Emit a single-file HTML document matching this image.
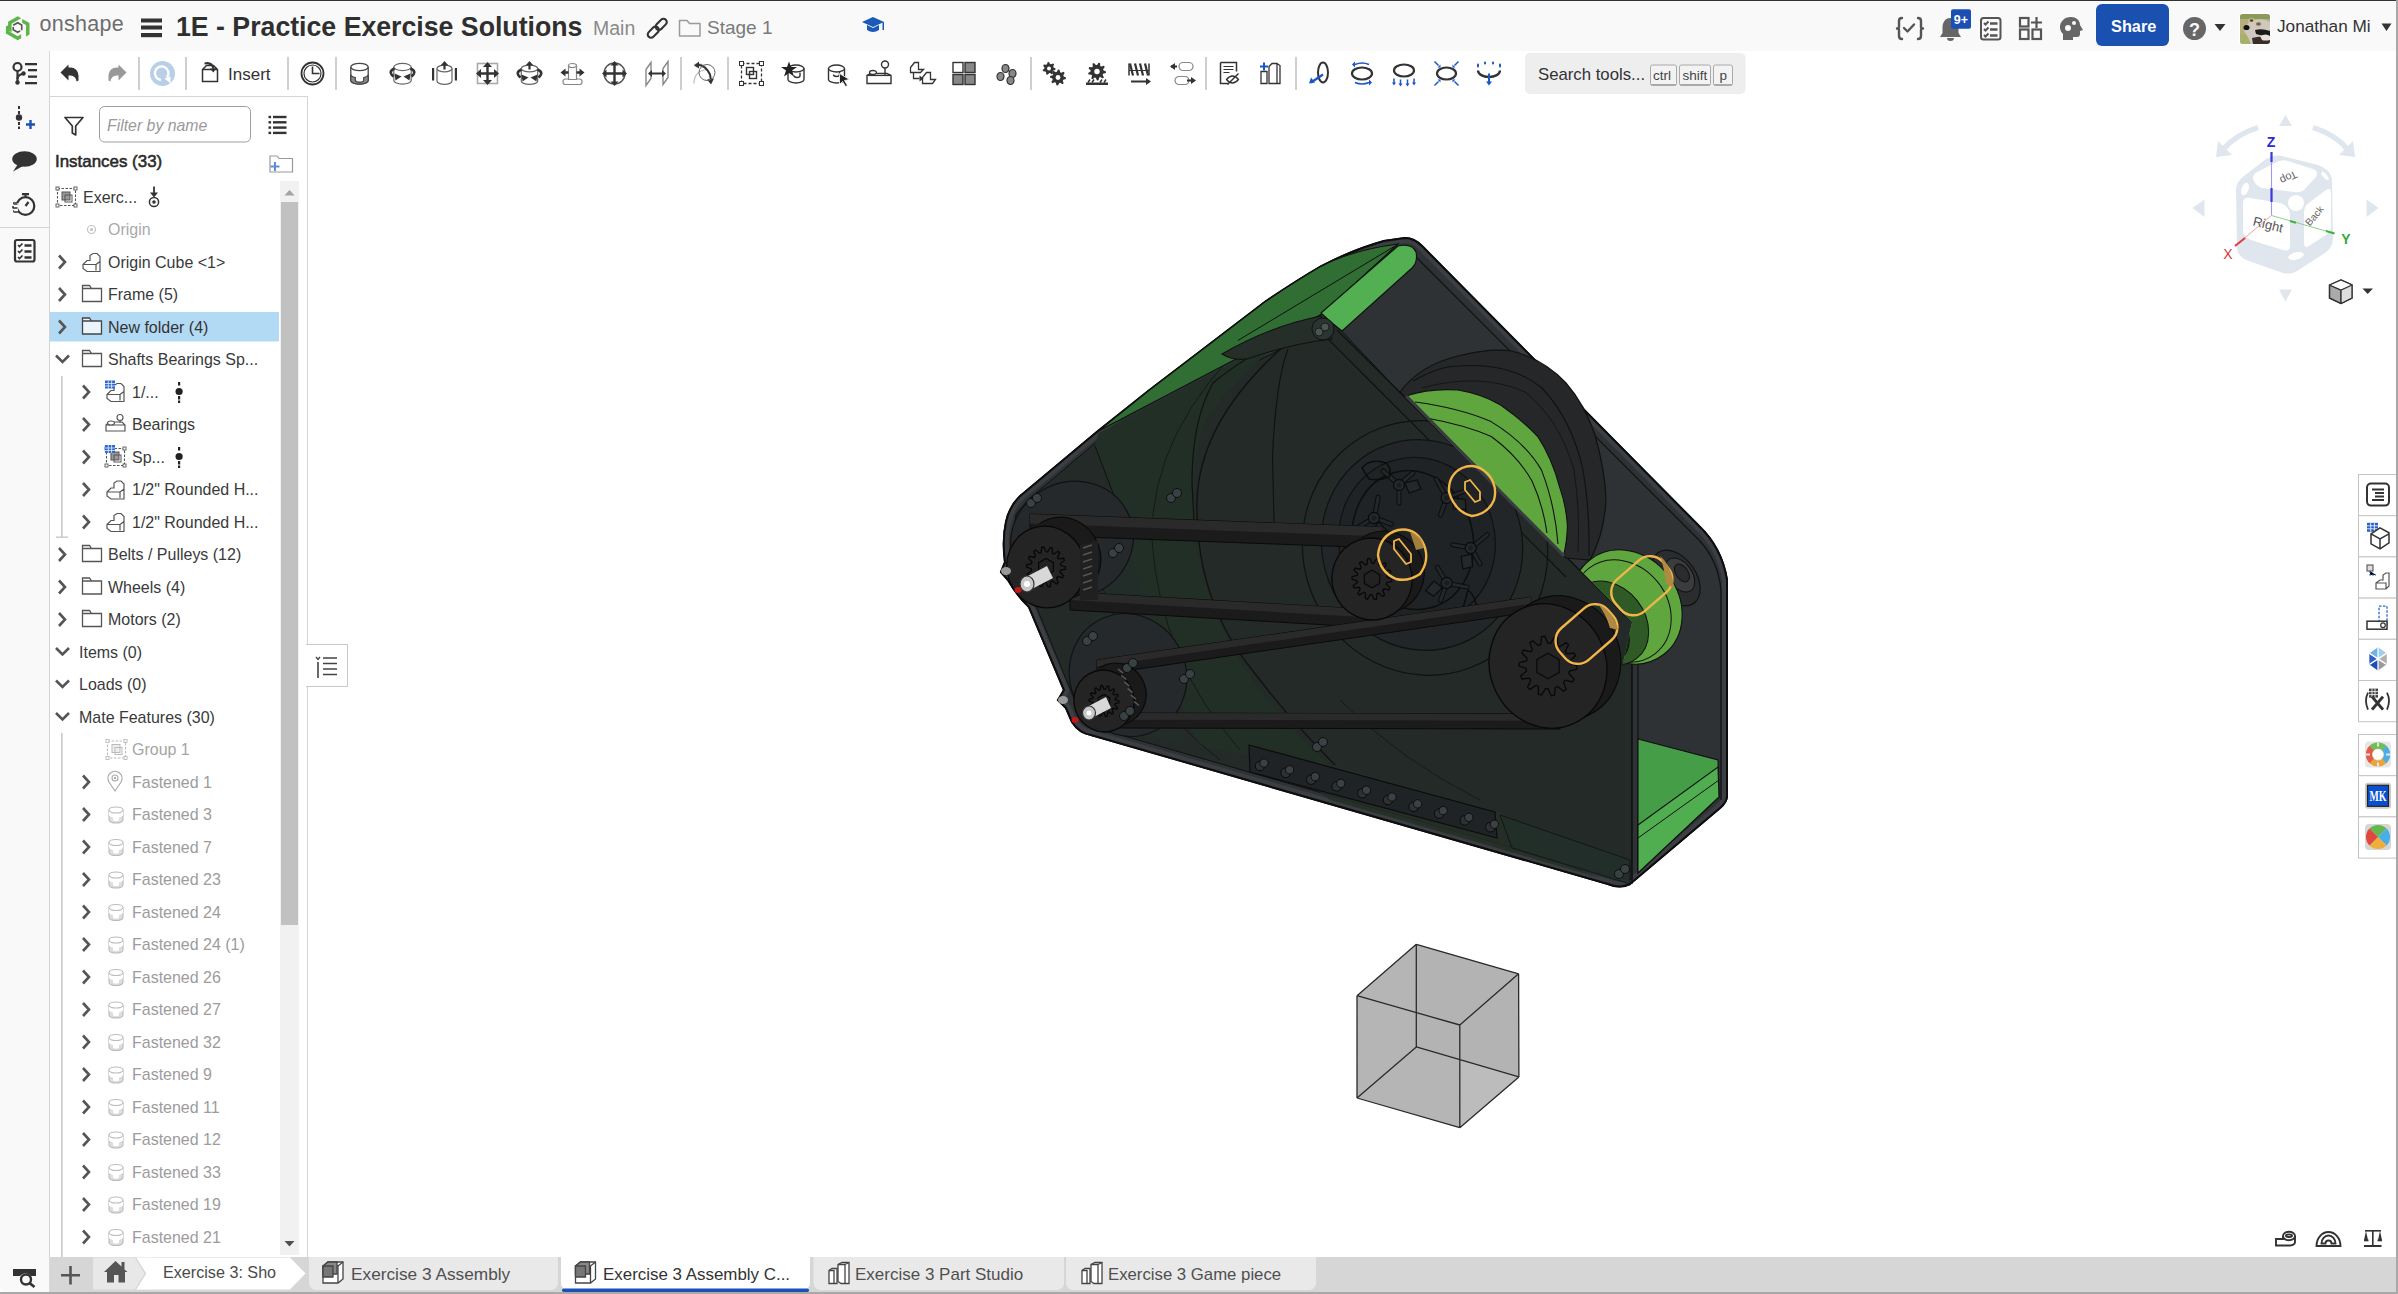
<!DOCTYPE html>
<html><head><meta charset="utf-8">
<style>
*{margin:0;padding:0;box-sizing:border-box}
html,body{width:2398px;height:1294px;overflow:hidden;background:#fff;font-family:"Liberation Sans",sans-serif;color:#333}
.a{position:absolute}
.t{position:absolute;white-space:nowrap;line-height:1}
svg.s{position:absolute;left:0;top:0;overflow:visible}
</style></head><body>

<div class="a" style="left:0;top:0;width:2398px;height:51px;background:#f9f9f9"></div>
<div class="a" style="left:0;top:0;width:2398px;height:1px;background:#333"></div>
<div class="a" style="left:0;top:51px;width:50px;height:1243px;background:#f9f9f9;border-right:1px solid #d9d9d9;border-bottom-left-radius:8px"></div>
<div class="a" style="left:0;top:227px;width:49px;height:1px;background:#d4d4d4"></div>
<div class="a" style="left:49px;top:96px;width:259px;height:1161px;background:#fff;border:1px solid #d4d4d4;border-bottom:none"></div>
<div class="a" style="left:50px;top:1257px;width:2346px;height:35px;background:#d6d6d6"></div>
<div class="a" style="left:0;top:1292px;width:2398px;height:2px;background:#a8a8a8"></div>
<svg class="s" width="2398" height="1294">
<path d="M1405,238 Q1414,238 1422,246 L1699,526 Q1722,548 1727,580 L1727,796 Q1727,802 1720,808 L1630,884 Q1620,889 1608,884 L1091,735 Q1079,733 1072,722 L1066,708 L1058,700 L1064,690 L1029,607 Q1018,597 1008,580 L1001,572 L1005,562 Q1002,540 1006,522 Q1010,503 1025,492 L1098,431 L1148.6,390.7 L1265.5,301.6 Q1296,281 1321,266.4 Q1352,250 1384,241 Z" fill="#2e3235" stroke="#0d0d0d" stroke-width="2"/>
<defs><clipPath id="silc"><path d="M1405,238 Q1414,238 1422,246 L1699,526 Q1722,548 1727,580 L1727,796 Q1727,802 1720,808 L1630,884 Q1620,889 1608,884 L1091,735 Q1079,733 1072,722 L1066,708 L1058,700 L1064,690 L1029,607 Q1018,597 1008,580 L1001,572 L1005,562 Q1002,540 1006,522 Q1010,503 1025,492 L1098,431 L1148.6,390.7 L1265.5,301.6 Q1296,281 1321,266.4 Q1352,250 1384,241 Z"/></clipPath></defs><path d="M1405,238 Q1414,238 1422,246 L1699,526 Q1722,548 1727,580 L1727,796 Q1727,802 1720,808 L1630,884 Q1620,889 1608,884 L1091,735 Q1079,733 1072,722 L1066,708 L1058,700 L1064,690 L1029,607 Q1018,597 1008,580 L1001,572 L1005,562 Q1002,540 1006,522 Q1010,503 1025,492 L1098,431 L1148.6,390.7 L1265.5,301.6 Q1296,281 1321,266.4 Q1352,250 1384,241 Z" fill="none" stroke="#3b3f43" stroke-width="10" stroke-linejoin="round" clip-path="url(#silc)"/>
<path d="M1029,499 L1100,439 L1116,431 L1334,323 L1408,401 L1632,622 L1632,880 L1610,876 L1093,727 L1080,713 L1036,606 L1017,578 L1013,540 L1016,514 Z" fill="#232a28" stroke="#111" stroke-width="1"/>
<path d="M1405,238 Q1414,238 1422,246 L1699,526 Q1722,548 1727,580 L1727,796 Q1727,802 1720,808 L1630,884 Q1620,889 1608,884 L1091,735 Q1079,733 1072,722 L1066,708 L1058,700 L1064,690 L1029,607 Q1018,597 1008,580 L1001,572 L1005,562 Q1002,540 1006,522 Q1010,503 1025,492 L1098,431 L1148.6,390.7 L1265.5,301.6 Q1296,281 1321,266.4 Q1352,250 1384,241 Z" fill="none" stroke="#0d0d0d" stroke-width="2"/>
<path d="M1098.5,433 L1321,316 Q1240,365 1204,424 Q1190,470 1195,540 Q1210,620 1253,680 Q1290,730 1330,765 L1200,748 Q1150,640 1121,514 L1095,446 Z" fill="#213026" opacity="0.97"/>
<path d="M1150,470 Q1130,560 1160,660 L1180,740 L1130,735 L1100,660 L1080,560 Z" fill="#22302a" opacity="0.6"/>
<path d="M1260,745 L1500,812 L1560,860 L1600,878 L1330,800 Z" fill="#243026" opacity="0.8"/>
<path d="M1416,257 L1699,540 Q1718,560 1721,590 L1721,800" fill="none" stroke="#111" stroke-width="1.2"/>
<path d="M1327,338 L1566,577 M1337,330 L1632,622 M1632,622 V884 M1638,630 V873" fill="none" stroke="#111" stroke-width="1.2"/>
<path d="M1284,346 Q1200,420 1197,500 Q1195,600 1253,671 Q1290,720 1335,765" fill="none" stroke="#111" stroke-width="1.3"/>
<path d="M1255,333 Q1150,430 1152,540 Q1160,660 1240,750" fill="none" stroke="#151a17" stroke-width="1"/>
<path d="M1340,700 Q1400,760 1480,800 M1100,580 Q1140,700 1220,760" fill="none" stroke="#161a18" stroke-width="1"/>
<path d="M1316,318 Q1240,360 1213,383 Q1192,420 1192,483 L1194,522" fill="none" stroke="#111" stroke-width="1.2"/>
<path d="M1288,349 Q1276,380 1272.5,456 L1274,522" fill="none" stroke="#111" stroke-width="1.1"/>
<path d="M1095,446 L1121,514" stroke="#111" stroke-width="1"/>
<path d="M1098.5,431 L1148.6,390.7 L1265.5,301.6 Q1296,281 1321,266.4 Q1352,250 1398,244 L1321,314.6 Z" fill="#306e33" stroke="#111" stroke-width="1.1"/>
<path d="M1237.7,340.6 L1395,246" stroke="#111" stroke-width="1"/>
<path d="M1222,354 Q1270,326 1321,316 L1332,339 Q1290,344 1250,358 Q1235,362 1222,354 Z" fill="#262e29" stroke="#111" stroke-width="1.1"/>
<path d="M1321,313 L1398,246 Q1412,243 1416,252 Q1418,262 1412,268 L1342,331 Q1330,322 1321,313 Z" fill="#52b052" stroke="#111" stroke-width="1.1"/>
<circle cx="1323" cy="329" r="11" fill="#2a3430" stroke="#111" stroke-width="1"/><circle cx="1319" cy="332" r="4" fill="#4a5550" stroke="#111" stroke-width="0.8"/><circle cx="1325" cy="327" r="4" fill="#4a5550" stroke="#111" stroke-width="0.8"/>
<ellipse cx="1425" cy="548" rx="122" ry="128" fill="none" stroke="#111" stroke-width="1.2" transform="rotate(-20 1425 548)"/>
<ellipse cx="1422" cy="545" rx="100" ry="106" fill="#232628" stroke="#111" stroke-width="1.2" transform="rotate(-20 1422 545)"/>
<ellipse cx="1417" cy="541" rx="78" ry="84" fill="#202325" stroke="#111" stroke-width="1.2" transform="rotate(-15 1417 541)"/>
<ellipse cx="1413" cy="540" rx="60" ry="70" fill="none" stroke="#0e0e0e" stroke-width="1.6" transform="rotate(-15 1413 540)"/>
<g transform="translate(1399,485) rotate(0)"><path d="M-3,-3 L-16,-14 M3,-3 L14,-12 M0,4 L0,18" stroke="#0c0c0c" stroke-width="5" stroke-linecap="round"/><path d="M-3,-3 L-16,-14 M3,-3 L14,-12 M0,4 L0,18" stroke="#23272a" stroke-width="3" stroke-linecap="round"/><circle r="5.5" fill="#25292c" stroke="#0c0c0c" stroke-width="1.3"/><circle r="2.5" fill="#1a1d1f"/><path d="M6,-2 l12,-3 l4,9 l-12,4 z" fill="#24282a" stroke="#0c0c0c" stroke-width="1.2"/></g>
<g transform="translate(1374,518) rotate(60)"><path d="M-3,-3 L-16,-14 M3,-3 L14,-12 M0,4 L0,18" stroke="#0c0c0c" stroke-width="5" stroke-linecap="round"/><path d="M-3,-3 L-16,-14 M3,-3 L14,-12 M0,4 L0,18" stroke="#23272a" stroke-width="3" stroke-linecap="round"/><circle r="5.5" fill="#25292c" stroke="#0c0c0c" stroke-width="1.3"/><circle r="2.5" fill="#1a1d1f"/><path d="M6,-2 l12,-3 l4,9 l-12,4 z" fill="#24282a" stroke="#0c0c0c" stroke-width="1.2"/></g>
<g transform="translate(1446.6,498) rotate(20)"><path d="M-3,-3 L-16,-14 M3,-3 L14,-12 M0,4 L0,18" stroke="#0c0c0c" stroke-width="5" stroke-linecap="round"/><path d="M-3,-3 L-16,-14 M3,-3 L14,-12 M0,4 L0,18" stroke="#23272a" stroke-width="3" stroke-linecap="round"/><circle r="5.5" fill="#25292c" stroke="#0c0c0c" stroke-width="1.3"/><circle r="2.5" fill="#1a1d1f"/><path d="M6,-2 l12,-3 l4,9 l-12,4 z" fill="#24282a" stroke="#0c0c0c" stroke-width="1.2"/></g>
<g transform="translate(1470.7,548) rotate(100)"><path d="M-3,-3 L-16,-14 M3,-3 L14,-12 M0,4 L0,18" stroke="#0c0c0c" stroke-width="5" stroke-linecap="round"/><path d="M-3,-3 L-16,-14 M3,-3 L14,-12 M0,4 L0,18" stroke="#23272a" stroke-width="3" stroke-linecap="round"/><circle r="5.5" fill="#25292c" stroke="#0c0c0c" stroke-width="1.3"/><circle r="2.5" fill="#1a1d1f"/><path d="M6,-2 l12,-3 l4,9 l-12,4 z" fill="#24282a" stroke="#0c0c0c" stroke-width="1.2"/></g>
<g transform="translate(1446.6,583) rotate(150)"><path d="M-3,-3 L-16,-14 M3,-3 L14,-12 M0,4 L0,18" stroke="#0c0c0c" stroke-width="5" stroke-linecap="round"/><path d="M-3,-3 L-16,-14 M3,-3 L14,-12 M0,4 L0,18" stroke="#23272a" stroke-width="3" stroke-linecap="round"/><circle r="5.5" fill="#25292c" stroke="#0c0c0c" stroke-width="1.3"/><circle r="2.5" fill="#1a1d1f"/><path d="M6,-2 l12,-3 l4,9 l-12,4 z" fill="#24282a" stroke="#0c0c0c" stroke-width="1.2"/></g>
<path d="M1362,468 q8,-10 24,-5 q6,5 3,14 q-10,4 -20,2 z M1468,590 q10,8 8,24 q-8,4 -14,-2 z" fill="none" stroke="#0c0c0c" stroke-width="1.5"/>
<path d="M1400,392 Q1420,365 1458,356 Q1490,348 1512,351 Q1545,360 1566,383 Q1585,405 1595,435 Q1605,470 1606,500 Q1604,535 1590,560 L1566,558 Z" fill="#262728" stroke="#111" stroke-width="1.2"/>
<path d="M1413,381 Q1440,366 1458,366 Q1510,362 1542,388 Q1572,420 1583,470 Q1590,510 1589,556" fill="none" stroke="#111" stroke-width="1.1"/>
<path d="M1422,388 Q1480,372 1525,392 Q1560,420 1574,470 Q1580,510 1578,552" fill="none" stroke="#151515" stroke-width="1"/>
<path d="M1406.9,395.7 Q1430,388 1457.9,390 Q1482,394 1500.6,405 Q1522,420 1537.7,436.5 Q1552,458 1560,488.4 Q1566,505 1567.4,525.5 Q1567,542 1563.7,555 Z" fill="#60a63e" stroke="#111" stroke-width="1.1"/>
<path d="M1415,402 Q1460,408 1491,421.6 Q1525,442 1541.4,469.9 Q1555,505 1558,544" fill="none" stroke="#111" stroke-width="1.1"/>
<path d="M1426.4,418 Q1465,425 1491.3,436.5 Q1518,456 1532,481 Q1543,505 1547,533" fill="none" stroke="#111" stroke-width="1.1"/>
<path d="M1406,396 L1564,556" stroke="#3a3e42" stroke-width="3"/>
<ellipse cx="1072" cy="540" rx="62" ry="58" fill="#25292c" stroke="#111" stroke-width="1.2" transform="rotate(-25 1072 540)"/>
<ellipse cx="1128" cy="675" rx="58" ry="62" fill="#25292c" stroke="#111" stroke-width="1.2" transform="rotate(-25 1128 675)"/>
<path d="M1030,514 L1382,527 L1382,548 L1030,535 Z" fill="#1b1b1b" stroke="#0a0a0a" stroke-width="1"/><path d="M1030,514 L1382,527 L1382,536.45 L1030,523.45 Z" fill="#2a2a2a"/>
<path d="M1070,592 L1380,610 L1380,628 L1070,610 Z" fill="#1b1b1b" stroke="#0a0a0a" stroke-width="1"/><path d="M1070,592 L1380,610 L1380,618.1 L1070,600.1 Z" fill="#2a2a2a"/>
<path d="M1097,660 L1531,597 L1531,612 L1097,675 Z" fill="#1b1b1b" stroke="#0a0a0a" stroke-width="1"/><path d="M1097,660 L1531,597 L1531,603.75 L1097,666.75 Z" fill="#2a2a2a"/>
<path d="M1115,713 L1560,714 L1560,729 L1115,728 Z" fill="#1b1b1b" stroke="#0a0a0a" stroke-width="1"/><path d="M1115,713 L1560,714 L1560,720.75 L1115,719.75 Z" fill="#2a2a2a"/>
<defs><clipPath id="cr"><polygon points="1400,390 1632,622 1615,700 1800,800 1800,300 1400,300"/></clipPath></defs>
<ellipse cx="1676" cy="578" rx="20" ry="31" fill="#2a2c2e" stroke="#111" stroke-width="1.2" transform="rotate(-35 1676 578)"/><ellipse cx="1680" cy="575" rx="12" ry="19" fill="#3a3c3e" stroke="#111" stroke-width="1" transform="rotate(-35 1680 575)"/><ellipse cx="1682" cy="573" rx="6" ry="10" fill="#2a2c2e" stroke="#111" stroke-width="1" transform="rotate(-35 1682 573)"/>
<g clip-path="url(#cr)"><ellipse cx="1627" cy="607" rx="52" ry="60" fill="#60a63e" stroke="#111" stroke-width="1.1" transform="rotate(-38 1627 607)"/><ellipse cx="1622" cy="611" rx="46" ry="54" fill="none" stroke="#111" stroke-width="1" transform="rotate(-38 1622 611)"/><ellipse cx="1609" cy="623" rx="36" ry="45" fill="#2f5a26" stroke="#111" stroke-width="1" transform="rotate(-38 1609 623)"/><ellipse cx="1600" cy="632" rx="26" ry="34" fill="#1e2320" stroke="#111" stroke-width="1" transform="rotate(-38 1600 632)"/></g>
<ellipse cx="1061.6" cy="558.0" rx="39" ry="41" fill="#1a1a1a" stroke="#0a0a0a" stroke-width="1.2" transform="rotate(-20 1061.6 558.0)"/><path d="M1024.5,532.1 L1040.1,523.1 L1085.0,590.8 L1069.4,599.8 Z" fill="#1a1a1a"/><ellipse cx="1046" cy="567" rx="39" ry="41" fill="#242424" stroke="#080808" stroke-width="1.3" transform="rotate(-20 1046 567)"/><polygon points="1065.5,567.0 1065.4,569.2 1060.4,570.4 1060.0,572.0 1063.6,575.7 1062.5,577.7 1057.6,576.5 1056.5,577.8 1058.2,582.7 1056.4,584.0 1052.4,580.8 1050.9,581.4 1050.3,586.6 1048.2,587.0 1046.0,582.3 1044.3,582.2 1041.7,586.6 1039.6,586.0 1039.6,580.8 1038.1,579.9 1033.8,582.7 1032.2,581.2 1034.4,576.5 1033.5,575.1 1028.4,575.7 1027.6,573.6 1031.6,570.4 1031.3,568.7 1026.5,567.0 1026.6,564.8 1031.6,563.6 1032.0,562.0 1028.4,558.3 1029.5,556.3 1034.4,557.5 1035.5,556.2 1033.8,551.3 1035.6,550.0 1039.6,553.2 1041.1,552.6 1041.7,547.4 1043.8,547.0 1046.0,551.7 1047.7,551.8 1050.3,547.4 1052.4,548.0 1052.4,553.2 1053.9,554.1 1058.2,551.3 1059.8,552.8 1057.6,557.5 1058.5,558.9 1063.6,558.3 1064.4,560.4 1060.4,563.6 1060.7,565.3" fill="none" stroke="#080808" stroke-width="1.3"/><polygon points="1053.4,571.3 1046.0,575.6 1038.6,571.3 1038.6,562.7 1046.0,558.4 1053.4,562.7" fill="#222" stroke="#080808" stroke-width="1.2"/>
<path d="M1080,545 L1098,540 L1098,600 L1080,600 Z" fill="#202020"/>
<path d="M1083,548 l9,-3" stroke="#555" stroke-width="1.6"/><path d="M1083,555 l9,-3" stroke="#555" stroke-width="1.6"/><path d="M1083,562 l9,-3" stroke="#555" stroke-width="1.6"/><path d="M1083,569 l9,-3" stroke="#555" stroke-width="1.6"/><path d="M1083,576 l9,-3" stroke="#555" stroke-width="1.6"/><path d="M1083,583 l9,-3" stroke="#555" stroke-width="1.6"/><path d="M1083,590 l9,-3" stroke="#555" stroke-width="1.6"/>
<ellipse cx="1116.1" cy="694.0" rx="30" ry="31" fill="#1a1a1a" stroke="#0a0a0a" stroke-width="1.2" transform="rotate(-20 1116.1 694.0)"/><path d="M1087.5,674.6 L1099.6,667.6 L1134.1,718.8 L1122.0,725.8 Z" fill="#1a1a1a"/><ellipse cx="1104" cy="701" rx="30" ry="31" fill="#242424" stroke="#080808" stroke-width="1.3" transform="rotate(-20 1104 701)"/><polygon points="1119.0,701.0 1118.9,702.7 1115.1,703.6 1114.8,704.9 1117.5,707.7 1116.7,709.2 1112.9,708.3 1112.1,709.3 1113.4,713.1 1112.0,714.1 1108.9,711.6 1107.8,712.1 1107.3,716.1 1105.7,716.4 1104.0,712.7 1102.7,712.7 1100.7,716.1 1099.0,715.6 1099.1,711.6 1097.9,710.9 1094.6,713.1 1093.4,711.9 1095.1,708.3 1094.3,707.2 1090.5,707.7 1089.8,706.1 1092.9,703.6 1092.7,702.3 1089.0,701.0 1089.1,699.3 1092.9,698.4 1093.2,697.1 1090.5,694.3 1091.3,692.8 1095.1,693.7 1095.9,692.7 1094.6,688.9 1096.0,687.9 1099.1,690.4 1100.2,689.9 1100.7,685.9 1102.3,685.6 1104.0,689.3 1105.3,689.3 1107.3,685.9 1109.0,686.4 1108.9,690.4 1110.1,691.1 1113.4,688.9 1114.6,690.1 1112.9,693.7 1113.7,694.8 1117.5,694.3 1118.2,695.9 1115.1,698.4 1115.3,699.7" fill="none" stroke="#080808" stroke-width="1.3"/><polygon points="1109.7,704.3 1104.0,707.6 1098.3,704.3 1098.3,697.7 1104.0,694.4 1109.7,697.7" fill="#222" stroke="#080808" stroke-width="1.2"/>
<path d="M1118.0,669.0 l5,4" stroke="#5a5a5a" stroke-width="1.6"/><path d="M1121.2,675.5 l5,4" stroke="#5a5a5a" stroke-width="1.6"/><path d="M1124.4,682.0 l5,4" stroke="#5a5a5a" stroke-width="1.6"/><path d="M1127.6,688.5 l5,4" stroke="#5a5a5a" stroke-width="1.6"/><path d="M1130.8,695.0 l5,4" stroke="#5a5a5a" stroke-width="1.6"/><path d="M1134.0,701.5 l5,4" stroke="#5a5a5a" stroke-width="1.6"/>
<ellipse cx="1384.1" cy="572.0" rx="40" ry="41" fill="#1a1a1a" stroke="#0a0a0a" stroke-width="1.2" transform="rotate(-20 1384.1 572.0)"/><path d="M1350.0,544.1 L1362.1,537.1 L1408.1,604.8 L1396.0,611.8 Z" fill="#1a1a1a"/><ellipse cx="1372" cy="579" rx="40" ry="41" fill="#242424" stroke="#080808" stroke-width="1.3" transform="rotate(-20 1372 579)"/><polygon points="1392.0,579.0 1391.9,581.3 1386.8,582.5 1386.3,584.2 1390.0,587.9 1388.9,590.0 1383.9,588.8 1382.7,590.1 1384.5,595.1 1382.6,596.4 1378.6,593.1 1377.0,593.8 1376.5,599.1 1374.2,599.5 1372.0,594.7 1370.3,594.6 1367.5,599.1 1365.4,598.4 1365.4,593.1 1363.9,592.3 1359.5,595.1 1357.9,593.6 1360.1,588.8 1359.1,587.3 1354.0,587.9 1353.1,585.8 1357.2,582.5 1356.9,580.8 1352.0,579.0 1352.1,576.7 1357.2,575.5 1357.7,573.8 1354.0,570.1 1355.1,568.0 1360.1,569.2 1361.3,567.9 1359.5,562.9 1361.4,561.6 1365.4,564.9 1367.0,564.2 1367.5,558.9 1369.8,558.5 1372.0,563.3 1373.7,563.4 1376.5,558.9 1378.6,559.6 1378.6,564.9 1380.1,565.7 1384.5,562.9 1386.1,564.4 1383.9,569.2 1384.9,570.7 1390.0,570.1 1390.9,572.2 1386.8,575.5 1387.1,577.2" fill="none" stroke="#080808" stroke-width="1.3"/><polygon points="1379.6,583.4 1372.0,587.8 1364.4,583.4 1364.4,574.6 1372.0,570.2 1379.6,574.6" fill="#222" stroke="#080808" stroke-width="1.2"/>
<ellipse cx="1561.9" cy="658.0" rx="58" ry="63" fill="#1a1a1a" stroke="#0a0a0a" stroke-width="1.2" transform="rotate(-25 1561.9 658.0)"/><path d="M1516.1,612.5 L1530.0,604.5 L1596.7,708.4 L1582.8,716.4 Z" fill="#1a1a1a"/><ellipse cx="1548" cy="666" rx="58" ry="63" fill="#242424" stroke="#080808" stroke-width="1.3" transform="rotate(-25 1548 666)"/><polygon points="1577.0,666.0 1576.8,669.3 1569.5,671.1 1568.8,673.5 1574.1,679.0 1572.6,681.9 1565.2,680.2 1563.6,682.1 1566.1,689.4 1563.4,691.3 1557.6,686.5 1555.3,687.4 1554.5,695.1 1551.2,695.7 1548.0,688.7 1545.5,688.6 1541.5,695.1 1538.4,694.2 1538.4,686.5 1536.3,685.2 1529.9,689.4 1527.5,687.1 1530.8,680.2 1529.3,678.1 1521.9,679.0 1520.6,675.9 1526.5,671.1 1526.1,668.5 1519.0,666.0 1519.2,662.7 1526.5,660.9 1527.2,658.5 1521.9,653.0 1523.4,650.1 1530.8,651.8 1532.4,649.9 1529.9,642.6 1532.6,640.7 1538.4,645.5 1540.7,644.6 1541.5,636.9 1544.8,636.3 1548.0,643.3 1550.5,643.4 1554.5,636.9 1557.6,637.8 1557.6,645.5 1559.7,646.8 1566.1,642.6 1568.5,644.9 1565.2,651.8 1566.7,653.9 1574.1,653.0 1575.4,656.1 1569.5,660.9 1569.9,663.5" fill="none" stroke="#080808" stroke-width="1.3"/><polygon points="1559.1,672.4 1548.0,678.8 1536.9,672.4 1536.9,659.6 1548.0,653.2 1559.1,659.6" fill="#222" stroke="#080808" stroke-width="1.2"/>
<path d="M1024,578 L1047,566 L1053,578 L1030,590 Z" fill="#d8d8d8"/><ellipse cx="1027" cy="584" rx="7" ry="8" fill="#c8c8c8" stroke="#333" stroke-width="1.2"/><circle cx="1027" cy="584" r="3" fill="#fff"/>
<path d="M1085,708 L1106,697 L1111,708 L1090,719 Z" fill="#d8d8d8"/><ellipse cx="1089" cy="713" rx="6.5" ry="7" fill="#c8c8c8" stroke="#333" stroke-width="1.2"/><circle cx="1089" cy="713" r="2.5" fill="#fff"/>
<ellipse cx="1006" cy="571" rx="5" ry="4" fill="#999"/><ellipse cx="1018" cy="590" rx="3.5" ry="3" fill="#c41818"/>
<ellipse cx="1063" cy="700" rx="5" ry="4" fill="#999"/><ellipse cx="1075" cy="720" rx="3.5" ry="3" fill="#c41818"/>
<path d="M1638,739 L1718,760 L1719,797 L1638,873 Z" fill="#469d47" stroke="#111" stroke-width="1.1"/>
<path d="M1638,825 L1718,767 L1719,797 L1638,873 Z" fill="#50ae50" stroke="#111" stroke-width="1.1"/>
<path d="M1638,838 L1719,780" stroke="#111" stroke-width="1"/>
<path d="M1249,745 L1495,812 L1497,838 L1250,772 Z" fill="#1f2325" stroke="#0c0c0c" stroke-width="1.2"/>
<circle cx="1260.0" cy="766.0" r="4.8" fill="#2c3134" stroke="#0a0a0a" stroke-width="1"/><circle cx="1264.0" cy="763.0" r="4.2" fill="#3a4044" stroke="#0a0a0a" stroke-width="0.9"/>
<circle cx="1285.6" cy="772.8" r="4.8" fill="#2c3134" stroke="#0a0a0a" stroke-width="1"/><circle cx="1289.6" cy="769.8" r="4.2" fill="#3a4044" stroke="#0a0a0a" stroke-width="0.9"/>
<circle cx="1311.2" cy="779.6" r="4.8" fill="#2c3134" stroke="#0a0a0a" stroke-width="1"/><circle cx="1315.2" cy="776.6" r="4.2" fill="#3a4044" stroke="#0a0a0a" stroke-width="0.9"/>
<circle cx="1336.8" cy="786.4" r="4.8" fill="#2c3134" stroke="#0a0a0a" stroke-width="1"/><circle cx="1340.8" cy="783.4" r="4.2" fill="#3a4044" stroke="#0a0a0a" stroke-width="0.9"/>
<circle cx="1362.4" cy="793.2" r="4.8" fill="#2c3134" stroke="#0a0a0a" stroke-width="1"/><circle cx="1366.4" cy="790.2" r="4.2" fill="#3a4044" stroke="#0a0a0a" stroke-width="0.9"/>
<circle cx="1388.0" cy="800.0" r="4.8" fill="#2c3134" stroke="#0a0a0a" stroke-width="1"/><circle cx="1392.0" cy="797.0" r="4.2" fill="#3a4044" stroke="#0a0a0a" stroke-width="0.9"/>
<circle cx="1413.6" cy="806.8" r="4.8" fill="#2c3134" stroke="#0a0a0a" stroke-width="1"/><circle cx="1417.6" cy="803.8" r="4.2" fill="#3a4044" stroke="#0a0a0a" stroke-width="0.9"/>
<circle cx="1439.2" cy="813.6" r="4.8" fill="#2c3134" stroke="#0a0a0a" stroke-width="1"/><circle cx="1443.2" cy="810.6" r="4.2" fill="#3a4044" stroke="#0a0a0a" stroke-width="0.9"/>
<circle cx="1464.8" cy="820.4" r="4.8" fill="#2c3134" stroke="#0a0a0a" stroke-width="1"/><circle cx="1468.8" cy="817.4" r="4.2" fill="#3a4044" stroke="#0a0a0a" stroke-width="0.9"/>
<circle cx="1490.4" cy="827.2" r="4.8" fill="#2c3134" stroke="#0a0a0a" stroke-width="1"/><circle cx="1494.4" cy="824.2" r="4.2" fill="#3a4044" stroke="#0a0a0a" stroke-width="0.9"/>
<path d="M1500,815 Q1520,822 1630,860 L1630,884 L1512,848 Z" fill="#22302a" stroke="#111" stroke-width="1" opacity="0.8"/>
<circle cx="1171" cy="498" r="4.5" fill="#3a4144" stroke="#0a0a0a" stroke-width="0.9"/><circle cx="1177" cy="493" r="4.5" fill="#3a4144" stroke="#0a0a0a" stroke-width="0.9"/>
<circle cx="1317" cy="747" r="4.5" fill="#3a4144" stroke="#0a0a0a" stroke-width="0.9"/><circle cx="1323" cy="742" r="4.5" fill="#3a4144" stroke="#0a0a0a" stroke-width="0.9"/>
<circle cx="1113" cy="553" r="4.5" fill="#3a4144" stroke="#0a0a0a" stroke-width="0.9"/><circle cx="1119" cy="548" r="4.5" fill="#3a4144" stroke="#0a0a0a" stroke-width="0.9"/>
<circle cx="1031" cy="503" r="4.5" fill="#3a4144" stroke="#0a0a0a" stroke-width="0.9"/><circle cx="1037" cy="498" r="4.5" fill="#3a4144" stroke="#0a0a0a" stroke-width="0.9"/>
<circle cx="1124" cy="716" r="4.5" fill="#3a4144" stroke="#0a0a0a" stroke-width="0.9"/><circle cx="1130" cy="711" r="4.5" fill="#3a4144" stroke="#0a0a0a" stroke-width="0.9"/>
<circle cx="1087" cy="641" r="4.5" fill="#3a4144" stroke="#0a0a0a" stroke-width="0.9"/><circle cx="1093" cy="636" r="4.5" fill="#3a4144" stroke="#0a0a0a" stroke-width="0.9"/>
<circle cx="1619" cy="874" r="4.5" fill="#3a4144" stroke="#0a0a0a" stroke-width="0.9"/><circle cx="1625" cy="869" r="4.5" fill="#3a4144" stroke="#0a0a0a" stroke-width="0.9"/>
<circle cx="1184" cy="679" r="4.5" fill="#3a4144" stroke="#0a0a0a" stroke-width="0.9"/><circle cx="1190" cy="674" r="4.5" fill="#3a4144" stroke="#0a0a0a" stroke-width="0.9"/>
<circle cx="1127" cy="668" r="4.5" fill="#3a4144" stroke="#0a0a0a" stroke-width="0.9"/><circle cx="1133" cy="663" r="4.5" fill="#3a4144" stroke="#0a0a0a" stroke-width="0.9"/>
<path d="M1449,492 Q1448,475 1462,468 Q1476,462 1488,474 Q1498,486 1494,500 Q1488,514 1472,516 Q1455,512 1449,492 Z" fill="none" stroke="#f2b54a" stroke-width="2.4"/>
<path d="M1465,482 L1470,480 L1480,492 L1480,500 L1475,502 L1465,490 Z" fill="none" stroke="#f2b54a" stroke-width="1.8"/>
<path d="M1378,555 Q1380,535 1398,530 Q1416,527 1424,545 Q1430,560 1420,574 Q1408,582 1396,579 Q1380,572 1378,555 Z" fill="none" stroke="#f2b54a" stroke-width="2.4"/>
<path d="M1394,541 L1399,539 L1411,554 L1411,562 L1406,564 L1394,549 Z" fill="none" stroke="#f2b54a" stroke-width="1.8"/>
<path d="M1410,532 Q1422,535 1424,548 L1416,550 Z" fill="#b08a40" opacity="0.9"/>
<rect x="-32" y="-21" width="64" height="42" rx="17" fill="none" stroke="#f2b54a" stroke-width="2.4" transform="translate(1586.5,634) rotate(-41)"/>
<path d="M1598,604 Q1614,612 1618,630 L1610,628 Q1606,614 1598,604 Z" fill="#b08a40"/>
<rect x="-31.5" y="-21" width="63" height="42" rx="17" fill="none" stroke="#f2b54a" stroke-width="2.4" transform="translate(1641.8,585.7) rotate(-41)"/>
<path d="M1660,556 Q1672,566 1674,588 L1666,584 Q1664,566 1660,556 Z" fill="#b08a40"/>
<polygon points="1416.3,944.3 1518.6,973.8 1518.9,1076.9 1459.8,1127.7 1357,1098 1357,995.7" fill="#b5b5b5"/>
<polygon points="1459.8,1025 1518.6,973.8 1518.9,1076.9 1459.8,1127.7" fill="#bcbcbc"/>
<polygon points="1416.3,944.3 1416.3,1046.9 1518.9,1076.9 1518.6,973.8" fill="#b3b3b3"/>
<path d="M1416.3,944.3 L1518.6,973.8 M1416.3,944.3 L1357,995.7 M1357,995.7 L1459.8,1025 M1459.8,1025 L1518.6,973.8 M1416.3,944.3 L1416.3,1046.9 M1416.3,1046.9 L1357,1098 M1416.3,1046.9 L1518.9,1076.9 M1357,995.7 L1357,1098 M1357,1098 L1459.8,1127.7 M1459.8,1127.7 L1518.9,1076.9 M1518.9,1076.9 L1518.6,973.8 M1459.8,1025 L1459.8,1127.7" stroke="#2a2a2a" stroke-width="1.3" fill="none"/>
</svg>
<svg class="s" width="2398" height="51">
<g transform="translate(17.7,26.3)">
<path d="M-9.6,-4.5 L0,-10 L3.5,-8 L-6.1,-2.5 V6 L-9.6,4 Z" fill="#5cb548"/>
<path d="M4.5,-7.4 L11.8,-3.2 V8.2 L8.3,10.2 V-1.2 L4.5,-3.4 Z" fill="#5cb548"/>
<path d="M-11.8,-1.4 V5.6 L0,12.4 L3.5,10.4 V6.4 L0,8.4 L-8.3,3.6 V-3.4 Z" fill="#5cb548" transform="translate(0,1.5)"/>
<path d="M-4.5,-1 L0,-3.6 L4,-1.3 V4 M-4.5,0.8 V3.5 L0,6 L2.5,4.6" fill="none" stroke="#555" stroke-width="1.6"/>
</g>
<!-- hamburger -->
<rect x="141" y="18.5" width="21" height="4" fill="#333"/>
<rect x="141" y="25.5" width="21" height="4" fill="#333"/>
<rect x="141" y="33" width="21" height="4.2" fill="#333"/>
<!-- link icon -->
<g fill="none" stroke="#333" stroke-width="2.1">
<rect x="-6.5" y="-3.3" width="13" height="6.6" rx="3.3" transform="translate(653.3,32.2) rotate(-45)"/>
<rect x="-6.5" y="-3.3" width="13" height="6.6" rx="3.3" transform="translate(661.2,24.3) rotate(-45)"/>
</g>
<!-- folder -->
<path d="M679.5,20.5 h7.5 l2.5,3 h10.5 v12.5 h-20.5 z" fill="none" stroke="#9a9a9a" stroke-width="1.5" stroke-linejoin="round"/>
<!-- grad cap -->
<g fill="#1a5ab8">
<polygon points="873,17 884,22 873,27 862,22"/>
<path d="M867,25 v5 q6,4 12,0 v-5 l-6,3 z"/>
<rect x="882.5" y="22" width="1.5" height="8"/>
</g>
</svg>
<div class="t" style="left:39.5px;top:14.0px;font-size:21.5px;color:#6d6d6d;letter-spacing:0.3px">onshape</div>
<div class="t" style="left:176px;top:11.9px;font-size:28.4px;color:#2f2f2f;font-weight:bold;transform:scaleX(0.94);transform-origin:0 0;">1E - Practice Exercise Solutions</div>
<div class="t" style="left:593px;top:18.9px;font-size:19.5px;color:#8a8a8a;">Main</div>
<div class="t" style="left:707px;top:18.4px;font-size:19px;color:#7a7a7a;">Stage 1</div>
<svg class="s" width="2398" height="51">
<g fill="none" stroke="#555" stroke-width="2.4" stroke-linecap="round" stroke-linejoin="round">
<path d="M1902,18 q-3,0 -3,3 v6 q0,1.5 -2,1.5 q2,0 2,1.5 v6 q0,3 3,3"/>
<path d="M1918,18 q3,0 3,3 v6 q0,1.5 2,1.5 q-2,0 -2,1.5 v6 q0,3 -3,3"/>
<path d="M1904,28 l3.5,3.5 l6.5,-7"/>
</g>
<!-- bell -->
<path d="M1950.5,18 c-6,0 -8,5 -8,10 v5 l-2.5,4 h21 l-2.5,-4 v-5 c0,-5 -2,-10 -8,-10 z M1947,38 h7 a3.5,3 0 0 1 -7,0z" fill="#666"/>
<rect x="1951" y="9.2" width="20" height="19.5" rx="2" fill="#1a50b4"/>
<text x="1961" y="24" font-family="Liberation Sans" font-size="12.5" font-weight="bold" fill="#fff" text-anchor="middle">9+</text>
<!-- checklist -->
<rect x="1981" y="18" width="19.5" height="21.5" rx="2.5" fill="none" stroke="#555" stroke-width="2"/>
<g stroke="#555" stroke-width="2" fill="none">
<path d="M1984,23 l1.5,1.5 l3,-3 M1984,29 l1.5,1.5 l3,-3 M1984,35 l1.5,1.5 l3,-3"/>
<path d="M1990,23.5 h7.5 M1990,29.5 h7.5 M1990,35.5 h7.5" stroke-width="2.4"/>
</g>
<!-- apps -->
<g fill="none" stroke="#555" stroke-width="2.2">
<rect x="2020" y="29.5" width="8.5" height="9.5"/>
<rect x="2032.5" y="29.5" width="8.5" height="9.5"/>
<rect x="2020" y="18" width="8.5" height="8.5"/>
<path d="M2036.5,17 v11 M2031,22.5 h11"/>
</g>
<!-- head gear -->
<path d="M2071,17 c-7,0 -11,5 -11,10 c0,3 1,5 3,7 v6 h10 v-3 h4 q3,0 3,-3 v-3 l3,-1 l-3,-5 c0,-5 -4,-8 -9,-8z" fill="#666"/>
<circle cx="2068" cy="28" r="3" fill="#f9f9f9"/><circle cx="2074" cy="23" r="2" fill="#f9f9f9"/>
<!-- share -->
<rect x="2096" y="4" width="73" height="42" rx="6" fill="#1a50b0"/>
<!-- help -->
<circle cx="2194.5" cy="28.5" r="11.5" fill="#666"/>
<text x="2194.5" y="35.5" font-family="Liberation Sans" font-size="18" font-weight="bold" fill="#f9f9f9" text-anchor="middle">?</text>
<polygon points="2214.5,24 2225.5,24 2220,31" fill="#333"/>
<!-- avatar -->
<defs><clipPath id="av"><rect x="2240" y="14" width="30" height="30" rx="3"/></clipPath></defs>
<rect x="2239" y="13" width="32" height="32" rx="3.5" fill="#fff"/>
<g clip-path="url(#av)">
<rect x="2240" y="14" width="30" height="30" fill="#b8ae7a"/>
<rect x="2240" y="14" width="30" height="5" fill="#8a9a5a"/>
<rect x="2240" y="34" width="10" height="10" fill="#a6b26a"/>
<path d="M2250,21 Q2262,17 2270,22 V44 H2251 Q2248,36 2244,31 Q2246,25 2250,21Z" fill="#d0c8c0"/>
<path d="M2255,30 Q2262,28 2270,31 V37 Q2262,36 2256,34Z" fill="#1a1a1a"/>
<path d="M2252,38 Q2262,35 2270,38 V44 H2253Z" fill="#3a2e28"/>
<path d="M2260,36 Q2266,33 2270,36 V40 Q2265,41 2262,40Z" fill="#e8e0d8"/>
<ellipse cx="2246.5" cy="27.5" rx="3" ry="2.6" fill="#111"/>
<ellipse cx="2251.5" cy="20.5" rx="3.2" ry="2.2" fill="#d8c890"/><ellipse cx="2251.5" cy="20.5" rx="1.8" ry="1.2" fill="#445"/>
<ellipse cx="2258.5" cy="24" rx="4" ry="3" fill="#d8c890"/><ellipse cx="2258.5" cy="24" rx="2.5" ry="1.8" fill="#667"/>
</g>
<polygon points="2381.5,23.5 2391.5,23.5 2386.5,31" fill="#333"/>
</svg>
<div class="t" style="left:2110.5px;top:18.1px;font-size:17px;color:#fff;font-weight:bold;transform:scaleX(0.96);transform-origin:0 0;">Share</div>
<div class="t" style="left:2277px;top:18.4px;font-size:17.2px;color:#333;">Jonathan Mi</div>
<svg class="s" width="2398" height="100">
<rect x="138" y="57" width="2" height="33" fill="#cfcfcf"/>
<rect x="185" y="57" width="2" height="33" fill="#cfcfcf"/>
<rect x="287" y="57" width="2" height="33" fill="#cfcfcf"/>
<rect x="335" y="57" width="2" height="33" fill="#cfcfcf"/>
<rect x="680" y="57" width="2" height="33" fill="#cfcfcf"/>
<rect x="727" y="57" width="2" height="33" fill="#cfcfcf"/>
<rect x="1030" y="57" width="2" height="33" fill="#cfcfcf"/>
<rect x="1205" y="57" width="2" height="33" fill="#cfcfcf"/>
<rect x="1295" y="57" width="2" height="33" fill="#cfcfcf"/>
<g transform="translate(71.5,73.5)"><path d="M-3,-6 h2 a8,8 0 0 1 8,8 v5 l-2,1 a6,6 0 0 0 -6,-6 h-2 v5 l-8,-8 l8,-8 z" fill="#333"/></g>
<g transform="translate(115.5,73.5)"><path d="M3,-6 h-2 a8,8 0 0 0 -8,8 v5 l2,1 a6,6 0 0 1 6,-6 h2 v5 l8,-8 l-8,-8 z" fill="#999"/></g>
<g transform="translate(162.5,73.5)"><circle r="12.5" fill="#b9cfe8"/><path d="M-1.5,6.5 a6.8,6.8 0 1 1 6,-2.5" fill="none" stroke="#fff" stroke-width="2.4"/><polygon points="2,5 8,10 8,3" fill="#fff"/></g>
<g transform="translate(210.5,73.5)"><path d="M-8,-4 l4,-4 h7 l4,4 v12 h-15 z M-8,-4 h15" fill="#fff" stroke="#333" stroke-width="1.5"/><path d="M-6,-11 q8,-2 10,6 l2,-1 l-3,5 l-4,-4 l3,0 q-2,-5 -8,-4z" fill="#333"/></g>
<g transform="translate(312.5,73.5)"><circle r="11" fill="none" stroke="#333" stroke-width="1.8"/><circle r="8.5" fill="none" stroke="#333" stroke-width="1.2"/><path d="M0,-7 V0 H7" fill="none" stroke="#333" stroke-width="1.6"/></g>
<g transform="translate(359.5,73.5)"><path d="M-8.7,-6.5 v13.5 a8.7,3.6 0 0 0 17.4,0 v-13.5" fill="#fff" stroke="#444" stroke-width="1.3"/><path d="M-8.7,1 v6 a8.7,3.6 0 0 0 17.4,0 v-6 a8.7,3.6 0 0 1 -4.5,3 v2.5 a4,2 0 0 1 -8.4,0 v-2.5 a8.7,3.6 0 0 1 -4.5,-3 z" fill="#8a8a8a" stroke="#444" stroke-width="1.2"/><ellipse cx="0" cy="-6.5" rx="8.7" ry="3.6" fill="#fff" stroke="#444" stroke-width="1.3"/></g>
<g transform="translate(402.5,73.5)"><path d="M-8.7,-6.5 v13.5 a8.7,3.6 0 0 0 17.4,0 v-13.5" fill="#fff" stroke="#666" stroke-width="1.2"/><ellipse cx="0" cy="-6.5" rx="8.7" ry="3.6" fill="#fff" stroke="#666" stroke-width="1.2"/><path d="M-8,-5 q-7,3 -1,8" fill="none" stroke="#333" stroke-width="2.6"/><polygon points="-8,0 -1,3 -7,7" fill="#333"/><path d="M8,-5 q7,3 1,8" fill="none" stroke="#333" stroke-width="2.6"/><polygon points="8,0 1,3 7,7" fill="#333"/></g>
<g transform="translate(444.5,73.5)"><path d="M-7.5,-5 v12.5 a7.5,3.4 0 0 0 15,0 v-12.5" fill="#fff" stroke="#666" stroke-width="1.2"/><ellipse cx="0" cy="-5" rx="7.5" ry="3.4" fill="#fff" stroke="#666" stroke-width="1.2"/><path d="M0,-4 v-5" stroke="#333" stroke-width="2.2"/><polygon points="-4,-8 0,-12.5 4,-8" fill="#333"/><rect x="-12.5" y="-5.5" width="2.2" height="12.5" fill="#333"/><rect x="10.3" y="-5.5" width="2.2" height="12.5" fill="#333"/></g>
<g transform="translate(487.5,73.5)"><rect x="-10" y="-10" width="20" height="20" fill="none" stroke="#aaa" stroke-width="1.6"/><path d="M0,-8 V8 M-8,0 H8" stroke="#333" stroke-width="2.4"/><polygon points="-4.5,-6.5 0,-11.5 4.5,-6.5" fill="#333"/><polygon points="-4.5,6.5 0,11.5 4.5,6.5" fill="#333"/><polygon points="-6.5,-4.5 -11.5,0 -6.5,4.5" fill="#333"/><polygon points="6.5,-4.5 11.5,0 6.5,4.5" fill="#333"/></g>
<g transform="translate(529.5,73.5)"><path d="M-8.2,-5 v12.5 a8.2,3.4 0 0 0 16.4,0 v-12.5" fill="#fff" stroke="#666" stroke-width="1.2"/><ellipse cx="0" cy="-5" rx="8.2" ry="3.4" fill="#fff" stroke="#666" stroke-width="1.2"/><path d="M0,-4 v-5" stroke="#333" stroke-width="2.2"/><polygon points="-4,-8 0,-12.5 4,-8" fill="#333"/><path d="M-8,-4 q-7,3 -1,8" fill="none" stroke="#333" stroke-width="2.6"/><polygon points="-8,1 -1,4 -7,8" fill="#333"/><path d="M8,-4 q7,3 1,8" fill="none" stroke="#333" stroke-width="2.6"/><polygon points="8,1 1,4 7,8" fill="#333"/></g>
<g transform="translate(572.5,73.5)"><rect x="-9.5" y="5.5" width="19" height="5.5" rx="2.5" fill="#fff" stroke="#888" stroke-width="1.2"/><path d="M-4,-8 v14 h8 v-14" fill="#fff" stroke="#888" stroke-width="1.2"/><ellipse cx="0" cy="-8" rx="4" ry="2" fill="#fff" stroke="#888" stroke-width="1.2"/><path d="M-10,-1 h6 M4,-1 h6" stroke="#333" stroke-width="2.4"/><polygon points="-7,-5 -12,-1 -7,3" fill="#333"/><polygon points="7,-5 12,-1 7,3" fill="#333"/></g>
<g transform="translate(614.5,73.5)"><circle r="10.5" fill="none" stroke="#555" stroke-width="1.4"/><path d="M0,-9 V9 M-9,0 H9" stroke="#333" stroke-width="2.4"/><polygon points="-4,-8 0,-12.5 4,-8" fill="#333"/><polygon points="-4,8 0,12.5 4,8" fill="#333"/><polygon points="-8,-4 -12.5,0 -8,4" fill="#333"/><polygon points="8,-4 12.5,0 8,4" fill="#333"/></g>
<g transform="translate(657,73.5)"><path d="M-11,-4 l5,-7 v16 l-5,7 z M11,4 l-5,7 v-16 l5,-7 z" fill="none" stroke="#888" stroke-width="1.4"/><path d="M-7,0 H7" stroke="#333" stroke-width="2"/><polygon points="-5,-3.5 -9,0 -5,3.5" fill="#333"/><polygon points="5,-3.5 9,0 5,3.5" fill="#333"/></g>
<g transform="translate(704,73.5)"><path d="M-10,-9 q10,-3 13,6 M-10,10 q0,-12 12,-14" fill="none" stroke="#bbb" stroke-width="1.2"/><path d="M-7,-9 q9,1 13,10 l1,6" fill="none" stroke="#333" stroke-width="2"/><polygon points="-10,-8 -5,-12 -5,-5" fill="#333"/><polygon points="3,6 7,11 10,5" fill="#333"/><circle cx="3" cy="-1" r="8" fill="none" stroke="#666" stroke-width="1"/></g>
<g transform="translate(751.5,73.5)"><rect x="-10" y="-10" width="20" height="20" fill="none" stroke="#333" stroke-width="1.3" stroke-dasharray="3,2"/><rect x="-12" y="-12" width="4" height="4" fill="#fff" stroke="#333"/><rect x="8" y="-12" width="4" height="4" fill="#fff" stroke="#333"/><rect x="-12" y="8" width="4" height="4" fill="#fff" stroke="#333"/><rect x="8" y="8" width="4" height="4" fill="#fff" stroke="#333"/><rect x="-5" y="-6" width="7" height="7" fill="none" stroke="#333" stroke-width="1.4"/><rect x="-2" y="-2" width="7" height="7" fill="none" stroke="#333" stroke-width="1.4"/></g>
<g transform="translate(795,73.5)"><path d="M-6,-5 v11 a8,3.5 0 0 0 16,0 v-11" fill="#fff" stroke="#333" stroke-width="1.4" transform="translate(-1,0)"/><ellipse cx="1" cy="-5" rx="8" ry="3.5" fill="#fff" stroke="#333" stroke-width="1.4"/><path d="M-1,2 a3,2 0 0 0 6,0 v-3" fill="none" stroke="#333" stroke-width="1.4"/><polygon points="-6,-12 -4,-6.5 2,-6.5 -3,-3 -1,3 -6,-0.5 -11,3 -9,-3 -14,-6.5 -8,-6.5" fill="#222"/></g>
<g transform="translate(837.5,73.5)"><path d="M-9,-5 v11 a8,3.5 0 0 0 16,0 v-11" fill="#fff" stroke="#333" stroke-width="1.4"/><ellipse cx="-1" cy="-5" rx="8" ry="3.5" fill="#fff" stroke="#333" stroke-width="1.4"/><path d="M-4,1 a3,2 0 0 0 6,0 v-3" fill="none" stroke="#333" stroke-width="1.4"/><polygon points="2,0 12,6 7,7 10,12 8,13 5,8 2,11" fill="#222" stroke="#fff" stroke-width="0.8"/></g>
<g transform="translate(879,73.5)"><path d="M-12,2 l4,-2 h16 l4,2 v8 h-24 z" fill="#fff" stroke="#333" stroke-width="1.4"/><path d="M-12,2 h24" stroke="#333" stroke-width="1.2"/><ellipse cx="-6" cy="-1" rx="3.5" ry="2" fill="#fff" stroke="#333" stroke-width="1.3"/><path d="M6,2 v-9" stroke="#333" stroke-width="1.4"/><circle cx="6" cy="-9" r="3.5" fill="#fff" stroke="#333" stroke-width="1.4"/></g>
<g transform="translate(922.5,73.5)"><path d="M-12,-6 l4,-5 h4 v7 h5 l-3,3 h-10 z" fill="#fff" stroke="#333" stroke-width="1.3"/><path d="M0,4 l4,-5 h4 v7 h5 l-3,4 h-10 z" fill="#fff" stroke="#333" stroke-width="1.3"/><path d="M-9,-1 v6 h6" fill="none" stroke="#333" stroke-width="1.3"/><polygon points="-3,2 1,5 -3,8" fill="#333"/></g>
<g transform="translate(964,73.5)"><rect x="-11" y="-11" width="10" height="10" fill="#fff" stroke="#333" stroke-width="1.4"/><rect x="1" y="-11" width="10" height="10" fill="#888" stroke="#333" stroke-width="1.4"/><rect x="-11" y="1" width="10" height="10" fill="#888" stroke="#333" stroke-width="1.4"/><rect x="1" y="1" width="10" height="10" fill="#888" stroke="#333" stroke-width="1.4"/></g>
<g transform="translate(1007.5,73.5)"><g fill="#888" stroke="#333" stroke-width="1.2"><ellipse cx="-7" cy="3" rx="3.5" ry="4"/><ellipse cx="-2" cy="-5" rx="3.5" ry="4"/><ellipse cx="5" cy="0" rx="3.5" ry="4"/><ellipse cx="3" cy="7" rx="3.5" ry="4"/></g></g>
<g transform="translate(1054,73.5)"><polygon points="1.50,-5.00 1.34,-3.55 -0.78,-2.97 -1.34,-2.08 -0.95,0.08 -2.18,0.86 -3.96,-0.44 -5.00,-0.32 -6.45,1.34 -7.82,0.86 -7.92,-1.34 -8.66,-2.08 -10.86,-2.18 -11.34,-3.55 -9.68,-5.00 -9.56,-6.04 -10.86,-7.82 -10.08,-9.05 -7.92,-8.66 -7.03,-9.22 -6.45,-11.34 -5.00,-11.50 -3.96,-9.56 -2.97,-9.22 -0.95,-10.08 0.08,-9.05 -0.78,-7.03 -0.44,-6.04" fill="#333"/><circle cx="-5" cy="-5" r="1.95" fill="#fff"/><polygon points="12.00,4.00 11.85,5.56 9.32,6.20 8.79,7.20 9.66,9.66 8.44,10.65 6.20,9.32 5.12,9.65 4.00,12.00 2.44,11.85 1.80,9.32 0.80,8.79 -1.66,9.66 -2.65,8.44 -1.32,6.20 -1.65,5.12 -4.00,4.00 -3.85,2.44 -1.32,1.80 -0.79,0.80 -1.66,-1.66 -0.44,-2.65 1.80,-1.32 2.88,-1.65 4.00,-4.00 5.56,-3.85 6.20,-1.32 7.20,-0.79 9.66,-1.66 10.65,-0.44 9.32,1.80 9.65,2.88" fill="#333"/><circle cx="4" cy="4" r="2.40" fill="#fff"/></g>
<g transform="translate(1097,73.5)"><polygon points="9.00,-2.00 8.86,-0.44 6.09,0.22 5.61,1.24 6.89,3.79 5.79,4.89 3.24,3.61 2.22,4.09 1.56,6.86 0.00,7.00 -1.13,4.38 -2.22,4.09 -4.50,5.79 -5.79,4.89 -4.96,2.17 -5.61,1.24 -8.46,1.08 -8.86,-0.44 -6.48,-2.00 -6.38,-3.13 -8.46,-5.08 -7.79,-6.50 -4.96,-6.17 -4.17,-6.96 -4.50,-9.79 -3.08,-10.46 -1.13,-8.38 -0.00,-8.48 1.56,-10.86 3.08,-10.46 3.24,-7.61 4.17,-6.96 6.89,-7.79 7.79,-6.50 6.09,-4.22 6.38,-3.13" fill="#333"/><circle cx="0" cy="-2" r="2.70" fill="#fff"/><rect x="-11" y="9" width="22" height="2.5" fill="#333"/><path d="M-9,9 l2,-3 M-5,9 l2,-3 M3,9 l2,-3 M7,9 l2,-3" stroke="#333" stroke-width="1.5"/></g>
<g transform="translate(1139,73.5)"><path d="M-10,-10 v12 M10,-10 v12" stroke="#333" stroke-width="1.5"/><path d="M-9,-10 l3,12 M-4,-10 l3,12 M1,-10 l3,12 M6,-10 l3,12" stroke="#333" stroke-width="2.2"/><path d="M-10,-3 h20" stroke="#333" stroke-width="1"/><path d="M-8,8 H8" stroke="#333" stroke-width="2"/><polygon points="7,4.5 12,8 7,11.5" fill="#333"/></g>
<g transform="translate(1182,73.5)"><rect x="-3" y="-11" width="14" height="8" rx="4" fill="#fff" stroke="#888" stroke-width="1.2"/><rect x="-7" y="3" width="14" height="8" rx="4" fill="#fff" stroke="#888" stroke-width="1.2"/><path d="M-11,-7 h6 M5,7 h6" stroke="#333" stroke-width="1.8"/><polygon points="-7,-10.5 -12,-7 -7,-3.5" fill="#333"/><polygon points="9,3.5 14,7 9,10.5" fill="#333"/></g>
<g transform="translate(1229.5,73.5)"><path d="M-9,-11 h16 v9 M-9,-11 v21 h8" fill="none" stroke="#333" stroke-width="1.5"/><path d="M-6,-7 h10 M-6,-4 h10 M-6,-1 h6" stroke="#333" stroke-width="1.2"/><path d="M-3,6 q6,-7 12,0 q-6,7 -12,0z" fill="none" stroke="#333" stroke-width="1.3"/><path d="M-2,11 L9,0" stroke="#333" stroke-width="1.5"/></g>
<g transform="translate(1272,73.5)"><path d="M-3,-7 l3,-3 h5 v20 h-8z M5,-10 l3,2 v18 h-3" fill="#fff" stroke="#333" stroke-width="1.3"/><path d="M-11,-2 h6 v12 h-6 z" fill="#fff" stroke="#333" stroke-width="1.3"/><path d="M-8,-11 v8 M-12,-7 h8" stroke="#1a56c4" stroke-width="2"/></g>
<g transform="translate(1320,73.5)"><ellipse cx="3" cy="-1" rx="5" ry="10" fill="none" stroke="#333" stroke-width="2"/><path d="M3,1 L-9,9" stroke="#1a56c4" stroke-width="2.2"/><polygon points="-11,10 -9,4 -5,9" fill="#1a56c4"/></g>
<g transform="translate(1362,73.5)"><ellipse cx="0" cy="0" rx="10" ry="6" fill="none" stroke="#333" stroke-width="2.2"/><path d="M-7,-9 q7,-3 14,0 M7,9 q-7,3 -14,0" fill="none" stroke="#1a56c4" stroke-width="1.5"/><polygon points="-7,-12 -10,-9 -7,-6" fill="#1a56c4"/><polygon points="7,12 10,9 7,6" fill="#1a56c4"/></g>
<g transform="translate(1404,73.5)"><ellipse cx="0" cy="-3" rx="10" ry="6" fill="none" stroke="#333" stroke-width="2.2"/><g stroke="#1a56c4" stroke-width="1.5"><path d="M-10,5 v5 M-3.5,6 v5 M3.5,6 v5 M10,5 v5"/></g><g fill="#1a56c4"><polygon points="-12,9 -8,9 -10,12"/><polygon points="-5.5,10 -1.5,10 -3.5,13"/><polygon points="1.5,10 5.5,10 3.5,13"/><polygon points="8,9 12,9 10,12"/></g></g>
<g transform="translate(1446.5,73.5)"><ellipse cx="0" cy="0" rx="9.5" ry="6" fill="none" stroke="#333" stroke-width="2.2"/><g stroke="#1a56c4" stroke-width="1.5"><path d="M-12,-12 l4,4 M12,-12 l-4,4 M-12,12 l4,-4 M12,12 l-4,-4"/></g><g fill="#1a56c4"><polygon points="-9,-6 -6,-6 -6,-9"/><polygon points="9,-6 6,-6 6,-9"/><polygon points="-9,6 -6,6 -6,9"/><polygon points="9,6 6,6 6,9"/></g></g>
<g transform="translate(1489,73.5)"><path d="M-11,-3 a11,6.5 0 0 0 22,0" fill="none" stroke="#333" stroke-width="2.4"/><g fill="#1a56c4"><rect x="-12" y="-10" width="2" height="4" rx="1"/><rect x="-5" y="-12" width="2" height="3" rx="1"/><rect x="3" y="-12" width="2" height="3" rx="1"/><rect x="10" y="-10" width="2" height="4" rx="1"/></g><path d="M0,0 v9" stroke="#1a56c4" stroke-width="2"/><polygon points="-3,8 3,8 0,12" fill="#1a56c4"/></g>
<rect x="1525" y="53" width="220.5" height="41" rx="5" fill="#eeeeee"/>
<rect x="1650.5" y="65" width="26" height="20.5" rx="2" fill="#f3f3f3" stroke="#aaa" stroke-width="1"/><rect x="1651" y="84" width="25" height="1.5" fill="#aaa"/>
<rect x="1679.5" y="65" width="31" height="20.5" rx="2" fill="#f3f3f3" stroke="#aaa" stroke-width="1"/><rect x="1680" y="84" width="30" height="1.5" fill="#aaa"/>
<rect x="1713.5" y="65" width="19" height="20.5" rx="2" fill="#f3f3f3" stroke="#aaa" stroke-width="1"/><rect x="1714" y="84" width="18" height="1.5" fill="#aaa"/>
</svg>
<div class="t" style="left:228px;top:65.5px;font-size:17px;color:#333;">Insert</div>
<div class="t" style="left:1537.5px;top:66.0px;font-size:17px;color:#333;transform:scaleX(0.985);transform-origin:0 0;">Search tools...</div>
<div class="t" style="left:1653px;top:69.0px;font-size:13.5px;color:#444;">ctrl</div>
<div class="t" style="left:1682.5px;top:69.0px;font-size:13.5px;color:#444;">shift</div>
<div class="t" style="left:1719.5px;top:69.0px;font-size:13.5px;color:#444;">p</div>
<svg class="s" width="60" height="1294">
<!-- tree icon 12..37, 62..85 -->
<g fill="none" stroke="#333" stroke-width="2.2">
<circle cx="17.5" cy="67" r="4"/>
<path d="M17.5,71 V83"/>
<path d="M17.5,79 q0,-4 5,-5"/>
</g>
<circle cx="17.5" cy="82.5" r="2.2" fill="#333"/><circle cx="23.5" cy="73.5" r="2.2" fill="#333"/>
<rect x="25" y="63" width="12" height="2.3" fill="#333"/>
<rect x="28" y="69" width="9" height="2.3" fill="#333"/>
<rect x="28" y="75.5" width="9" height="2.3" fill="#333"/>
<rect x="25" y="82" width="12" height="2.3" fill="#333"/>
<!-- add mate 16..36, 106..129 -->
<g fill="#333"><rect x="18" y="106" width="2" height="3"/><rect x="18" y="111" width="2" height="3"/><circle cx="19" cy="117.5" r="3.2"/><rect x="18" y="122" width="2" height="3"/><rect x="18" y="126.5" width="2" height="2.5"/></g>
<path d="M30.5,120 v9 M26,124.5 h9" stroke="#1a50b8" stroke-width="2.4"/>
<!-- comment 12..37, 151..171 -->
<ellipse cx="24.5" cy="159" rx="12.3" ry="7.8" fill="#333"/>
<polygon points="18,164 13,171.5 23,166" fill="#333"/>
<!-- stopwatch 13..36, 193..217 -->
<g fill="none" stroke="#333" stroke-width="2.2">
<circle cx="25.5" cy="206" r="8.8"/>
<path d="M25.5,206 l3,-4"/>
</g>
<rect x="22" y="193" width="7" height="2.3" fill="#333"/><rect x="24.5" y="194" width="2" height="3.5" fill="#333"/>
<path d="M13,203 h5 M12,207 h5 M13,211 h5" stroke="#333" stroke-width="1.6"/>
<rect x="14" y="203" width="4" height="10" fill="#f9f9f9"/>
<path d="M13.5,204 h4 M12.5,208 h5 M13.5,212 h4.5" stroke="#333" stroke-width="1.6"/>
<!-- checklist 14..35, 239..262 -->
<rect x="15" y="240" width="19.5" height="21.5" rx="2" fill="none" stroke="#333" stroke-width="2.2"/>
<path d="M18,245 l1.5,1.5 l3,-3 M18,251 l1.5,1.5 l3,-3 M18,257 l1.5,1.5 l3,-3" fill="none" stroke="#333" stroke-width="1.7"/>
<path d="M24.5,245.5 h7 M24.5,251.5 h7 M24.5,257.5 h7" stroke="#333" stroke-width="2.4"/>
<!-- bottom search icon 13..36, 1269..1287 -->
<path d="M13,1269 h23 v7 h-5 a7,7 0 0 0 -11,0 h-7z" fill="#333"/>
<circle cx="26" cy="1279.5" r="5" fill="none" stroke="#333" stroke-width="2.4"/>
<path d="M29.5,1283 l5,4" stroke="#333" stroke-width="2.8"/>
</svg>
<svg class="s" width="360" height="1294">
<path d="M65,117.5 h18 l-7.3,8.5 v9 l-3.4,-2 v-7 z" fill="none" stroke="#333" stroke-width="1.7" stroke-linejoin="round"/>
<rect x="99.5" y="106.5" width="151" height="35.5" rx="5" fill="#fff" stroke="#9e9e9e" stroke-width="1"/>
<rect x="268.5" y="115.8" width="2.6" height="2.4" fill="#333"/><rect x="273" y="115.8" width="13.5" height="2.4" fill="#333"/>
<rect x="268.5" y="121.1" width="2.6" height="2.4" fill="#333"/><rect x="273" y="121.1" width="13.5" height="2.4" fill="#333"/>
<rect x="268.5" y="126.39999999999999" width="2.6" height="2.4" fill="#333"/><rect x="273" y="126.39999999999999" width="13.5" height="2.4" fill="#333"/>
<rect x="268.5" y="131.70000000000002" width="2.6" height="2.4" fill="#333"/><rect x="273" y="131.70000000000002" width="13.5" height="2.4" fill="#333"/>
<path d="M270,172 v-16 h7 l2,2.5 h13.5 v13.5 z" fill="none" stroke="#999" stroke-width="1.2"/><path d="M275,162 v9 M270.5,166.5 h9" stroke="#5a8fd8" stroke-width="2"/>
<rect x="50" y="312" width="229" height="29.5" fill="#b3daf5"/>
<rect x="280" y="181" width="19" height="1074" fill="#f1f1f1"/>
<rect x="281" y="202" width="17" height="723" fill="#c1c1c1"/>
<polygon points="284.5,195.5 289.5,190 294.5,195.5" fill="#a3a3a3"/>
<polygon points="284.5,1241 294.5,1241 289.5,1246.5" fill="#505050"/>
<rect x="61" y="376" width="1.6" height="161" fill="#c8c8c8"/><rect x="56" y="536.5" width="12" height="1.4" fill="#c8c8c8"/>
<rect x="61" y="733" width="1.6" height="524" fill="#c8c8c8"/>
<rect x="57.5" y="188.5" width="18" height="17" fill="none" stroke="#555" stroke-width="1.1" stroke-dasharray="2.5,1.5"/><rect x="62" y="192.0" width="8" height="8" fill="#999" stroke="#555" stroke-width="1"/><rect x="65" y="195.0" width="7" height="7" fill="none" stroke="#555" stroke-width="1"/><rect x="56" y="187.0" width="3" height="3" fill="#fff" stroke="#555" stroke-width="0.9"/><rect x="74" y="187.0" width="3" height="3" fill="#fff" stroke="#555" stroke-width="0.9"/><rect x="56" y="204.0" width="3" height="3" fill="#fff" stroke="#555" stroke-width="0.9"/><rect x="74" y="204.0" width="3" height="3" fill="#fff" stroke="#555" stroke-width="0.9"/>
<path d="M154,186.5 v8" stroke="#333" stroke-width="1.8"/><polygon points="150,192.5 158,192.5 154,197.5" fill="#333"/><circle cx="154" cy="202.0" r="4.6" fill="none" stroke="#333" stroke-width="1.5"/><circle cx="154" cy="202.0" r="1.8" fill="#333"/>
<circle cx="91.5" cy="229.5" r="4" fill="none" stroke="#c4c4c4" stroke-width="1.2"/><circle cx="91.5" cy="229.5" r="1.6" fill="#c4c4c4"/>
<path d="M59,255.5 l6,6.5 l-6,6.5" fill="none" stroke="#555" stroke-width="2.6" stroke-linejoin="miter"/>
<path d="M83,264.5 l4,-4 h3 v-5 l3,-2 h4 l3,3 v15 h-13 l-4,-3z M83,264.5 h13 v6 M96,264.5 l4,-3" fill="#fff" stroke="#555" stroke-width="1.2"/>
<path d="M59,288.0 l6,6.5 l-6,6.5" fill="none" stroke="#555" stroke-width="2.6" stroke-linejoin="miter"/>
<path d="M82.5,285.5 h7 l2,3 h10 v13 h-19 z M82.5,288.5 h19" fill="none" stroke="#555" stroke-width="1.3"/>
<path d="M59,320.5 l6,6.5 l-6,6.5" fill="none" stroke="#555" stroke-width="2.6" stroke-linejoin="miter"/>
<path d="M82.5,318.0 h7 l2,3 h10 v13 h-19 z M82.5,321.0 h19" fill="#eaf4fb" stroke="#444" stroke-width="1.3"/>
<path d="M56,355.5 l6.5,6.5 l6.5,-6.5" fill="none" stroke="#555" stroke-width="2.6"/>
<path d="M82.5,350.5 h7 l2,3 h10 v13 h-19 z M82.5,353.5 h19" fill="none" stroke="#555" stroke-width="1.3"/>
<path d="M83,385.5 l6,6.5 l-6,6.5" fill="none" stroke="#555" stroke-width="2.6" stroke-linejoin="miter"/>
<path d="M107,394.5 l4,-4 h3 v-5 l3,-2 h4 l3,3 v15 h-13 l-4,-3z M107,394.5 h13 v6 M120,394.5 l4,-3" fill="#fff" stroke="#555" stroke-width="1.2"/>
<g fill="#2a6ad0"><rect x="105" y="380.5" width="10" height="8"/></g><path d="M105,383.5 h10 M105,386.0 h10 M108.3,380.5 v8 M111.6,380.5 v8" stroke="#fff" stroke-width="0.7"/>
<rect x="178.0" y="382.0" width="2.2" height="3.5" fill="#222"/><circle cx="179.1" cy="391.5" r="3.6" fill="#222"/><rect x="178.0" y="396.0" width="2.2" height="3.5" fill="#222"/><rect x="178.0" y="400.5" width="2.2" height="2.5" fill="#222"/>
<path d="M83,418.0 l6,6.5 l-6,6.5" fill="none" stroke="#555" stroke-width="2.6" stroke-linejoin="miter"/>
<path d="M106,425.0 v6 h19 v-6 l-3,-3 h-13z M106,425.0 h19" fill="#fff" stroke="#555" stroke-width="1.2"/><ellipse cx="111" cy="423.0" rx="3.5" ry="2" fill="#fff" stroke="#555" stroke-width="1.1"/><path d="M120,423.0 v-3" stroke="#555" stroke-width="1.2"/><ellipse cx="120" cy="417.5" rx="3" ry="3" fill="#fff" stroke="#555" stroke-width="1.1"/>
<path d="M83,450.5 l6,6.5 l-6,6.5" fill="none" stroke="#555" stroke-width="2.6" stroke-linejoin="miter"/>
<rect x="106.5" y="448.5" width="18" height="17" fill="none" stroke="#555" stroke-width="1.1" stroke-dasharray="2.5,1.5"/><rect x="111" y="452.0" width="8" height="8" fill="#999" stroke="#555" stroke-width="1"/><rect x="114" y="455.0" width="7" height="7" fill="none" stroke="#555" stroke-width="1"/><rect x="105" y="447.0" width="3" height="3" fill="#fff" stroke="#555" stroke-width="0.9"/><rect x="123" y="447.0" width="3" height="3" fill="#fff" stroke="#555" stroke-width="0.9"/><rect x="105" y="464.0" width="3" height="3" fill="#fff" stroke="#555" stroke-width="0.9"/><rect x="123" y="464.0" width="3" height="3" fill="#fff" stroke="#555" stroke-width="0.9"/><rect x="105" y="445.0" width="10" height="8" fill="#2a6ad0"/><path d="M105,448.0 h10 M105,450.5 h10 M108.3,445.0 v8 M111.6,445.0 v8" stroke="#fff" stroke-width="0.7"/>
<rect x="178.0" y="447.0" width="2.2" height="3.5" fill="#222"/><circle cx="179.1" cy="456.5" r="3.6" fill="#222"/><rect x="178.0" y="461.0" width="2.2" height="3.5" fill="#222"/><rect x="178.0" y="465.5" width="2.2" height="2.5" fill="#222"/>
<path d="M83,483.0 l6,6.5 l-6,6.5" fill="none" stroke="#555" stroke-width="2.6" stroke-linejoin="miter"/>
<path d="M107,492.0 l4,-4 h3 v-5 l3,-2 h4 l3,3 v15 h-13 l-4,-3z M107,492.0 h13 v6 M120,492.0 l4,-3" fill="#fff" stroke="#555" stroke-width="1.2"/>
<path d="M83,515.5 l6,6.5 l-6,6.5" fill="none" stroke="#555" stroke-width="2.6" stroke-linejoin="miter"/>
<path d="M107,524.5 l4,-4 h3 v-5 l3,-2 h4 l3,3 v15 h-13 l-4,-3z M107,524.5 h13 v6 M120,524.5 l4,-3" fill="#fff" stroke="#555" stroke-width="1.2"/>
<path d="M59,548.0 l6,6.5 l-6,6.5" fill="none" stroke="#555" stroke-width="2.6" stroke-linejoin="miter"/>
<path d="M82.5,545.5 h7 l2,3 h10 v13 h-19 z M82.5,548.5 h19" fill="none" stroke="#555" stroke-width="1.3"/>
<path d="M59,580.5 l6,6.5 l-6,6.5" fill="none" stroke="#555" stroke-width="2.6" stroke-linejoin="miter"/>
<path d="M82.5,578.0 h7 l2,3 h10 v13 h-19 z M82.5,581.0 h19" fill="none" stroke="#555" stroke-width="1.3"/>
<path d="M59,613.0 l6,6.5 l-6,6.5" fill="none" stroke="#555" stroke-width="2.6" stroke-linejoin="miter"/>
<path d="M82.5,610.5 h7 l2,3 h10 v13 h-19 z M82.5,613.5 h19" fill="none" stroke="#555" stroke-width="1.3"/>
<path d="M56,648.0 l6.5,6.5 l6.5,-6.5" fill="none" stroke="#555" stroke-width="2.6"/>
<path d="M56,680.5 l6.5,6.5 l6.5,-6.5" fill="none" stroke="#555" stroke-width="2.6"/>
<path d="M56,713.0 l6.5,6.5 l6.5,-6.5" fill="none" stroke="#555" stroke-width="2.6"/>
<rect x="107.5" y="741.0" width="18" height="17" fill="none" stroke="#bbb" stroke-width="1.1" stroke-dasharray="2.5,1.5"/><rect x="112" y="744.5" width="8" height="8" fill="#eee" stroke="#bbb" stroke-width="1"/><rect x="115" y="747.5" width="7" height="7" fill="none" stroke="#bbb" stroke-width="1"/><rect x="106" y="739.5" width="3" height="3" fill="#fff" stroke="#bbb" stroke-width="0.9"/><rect x="124" y="739.5" width="3" height="3" fill="#fff" stroke="#bbb" stroke-width="0.9"/><rect x="106" y="756.5" width="3" height="3" fill="#fff" stroke="#bbb" stroke-width="0.9"/><rect x="124" y="756.5" width="3" height="3" fill="#fff" stroke="#bbb" stroke-width="0.9"/>
<path d="M83,775.5 l6,6.5 l-6,6.5" fill="none" stroke="#555" stroke-width="2.6" stroke-linejoin="miter"/>
<path d="M115,791.0 l-6,-9 a7,7 0 1 1 12,0 z" fill="none" stroke="#aaa" stroke-width="1.2"/><circle cx="115" cy="778.0" r="3" fill="none" stroke="#aaa" stroke-width="1.1"/><circle cx="115" cy="778.0" r="1.2" fill="#aaa"/>
<path d="M83,808.0 l6,6.5 l-6,6.5" fill="none" stroke="#555" stroke-width="2.6" stroke-linejoin="miter"/>
<path d="M109,810.0 v10 a7,3 0 0 0 14,0 v-10" fill="#ddd" stroke="#bbb" stroke-width="1.1"/><path d="M109,810.0 v5 a7,3 0 0 0 4,2.5 v2 a3,1.5 0 0 0 6,0 v-2 a7,3 0 0 0 4,-2.5 v-5" fill="#fff"/><ellipse cx="116" cy="810.0" rx="7" ry="3" fill="#fff" stroke="#bbb" stroke-width="1.1"/>
<path d="M83,840.5 l6,6.5 l-6,6.5" fill="none" stroke="#555" stroke-width="2.6" stroke-linejoin="miter"/>
<path d="M109,842.5 v10 a7,3 0 0 0 14,0 v-10" fill="#ddd" stroke="#bbb" stroke-width="1.1"/><path d="M109,842.5 v5 a7,3 0 0 0 4,2.5 v2 a3,1.5 0 0 0 6,0 v-2 a7,3 0 0 0 4,-2.5 v-5" fill="#fff"/><ellipse cx="116" cy="842.5" rx="7" ry="3" fill="#fff" stroke="#bbb" stroke-width="1.1"/>
<path d="M83,873.0 l6,6.5 l-6,6.5" fill="none" stroke="#555" stroke-width="2.6" stroke-linejoin="miter"/>
<path d="M109,875.0 v10 a7,3 0 0 0 14,0 v-10" fill="#ddd" stroke="#bbb" stroke-width="1.1"/><path d="M109,875.0 v5 a7,3 0 0 0 4,2.5 v2 a3,1.5 0 0 0 6,0 v-2 a7,3 0 0 0 4,-2.5 v-5" fill="#fff"/><ellipse cx="116" cy="875.0" rx="7" ry="3" fill="#fff" stroke="#bbb" stroke-width="1.1"/>
<path d="M83,905.5 l6,6.5 l-6,6.5" fill="none" stroke="#555" stroke-width="2.6" stroke-linejoin="miter"/>
<path d="M109,907.5 v10 a7,3 0 0 0 14,0 v-10" fill="#ddd" stroke="#bbb" stroke-width="1.1"/><path d="M109,907.5 v5 a7,3 0 0 0 4,2.5 v2 a3,1.5 0 0 0 6,0 v-2 a7,3 0 0 0 4,-2.5 v-5" fill="#fff"/><ellipse cx="116" cy="907.5" rx="7" ry="3" fill="#fff" stroke="#bbb" stroke-width="1.1"/>
<path d="M83,938.0 l6,6.5 l-6,6.5" fill="none" stroke="#555" stroke-width="2.6" stroke-linejoin="miter"/>
<path d="M109,940.0 v10 a7,3 0 0 0 14,0 v-10" fill="#ddd" stroke="#bbb" stroke-width="1.1"/><path d="M109,940.0 v5 a7,3 0 0 0 4,2.5 v2 a3,1.5 0 0 0 6,0 v-2 a7,3 0 0 0 4,-2.5 v-5" fill="#fff"/><ellipse cx="116" cy="940.0" rx="7" ry="3" fill="#fff" stroke="#bbb" stroke-width="1.1"/>
<path d="M83,970.5 l6,6.5 l-6,6.5" fill="none" stroke="#555" stroke-width="2.6" stroke-linejoin="miter"/>
<path d="M109,972.5 v10 a7,3 0 0 0 14,0 v-10" fill="#ddd" stroke="#bbb" stroke-width="1.1"/><path d="M109,972.5 v5 a7,3 0 0 0 4,2.5 v2 a3,1.5 0 0 0 6,0 v-2 a7,3 0 0 0 4,-2.5 v-5" fill="#fff"/><ellipse cx="116" cy="972.5" rx="7" ry="3" fill="#fff" stroke="#bbb" stroke-width="1.1"/>
<path d="M83,1003.0 l6,6.5 l-6,6.5" fill="none" stroke="#555" stroke-width="2.6" stroke-linejoin="miter"/>
<path d="M109,1005.0 v10 a7,3 0 0 0 14,0 v-10" fill="#ddd" stroke="#bbb" stroke-width="1.1"/><path d="M109,1005.0 v5 a7,3 0 0 0 4,2.5 v2 a3,1.5 0 0 0 6,0 v-2 a7,3 0 0 0 4,-2.5 v-5" fill="#fff"/><ellipse cx="116" cy="1005.0" rx="7" ry="3" fill="#fff" stroke="#bbb" stroke-width="1.1"/>
<path d="M83,1035.5 l6,6.5 l-6,6.5" fill="none" stroke="#555" stroke-width="2.6" stroke-linejoin="miter"/>
<path d="M109,1037.5 v10 a7,3 0 0 0 14,0 v-10" fill="#ddd" stroke="#bbb" stroke-width="1.1"/><path d="M109,1037.5 v5 a7,3 0 0 0 4,2.5 v2 a3,1.5 0 0 0 6,0 v-2 a7,3 0 0 0 4,-2.5 v-5" fill="#fff"/><ellipse cx="116" cy="1037.5" rx="7" ry="3" fill="#fff" stroke="#bbb" stroke-width="1.1"/>
<path d="M83,1068.0 l6,6.5 l-6,6.5" fill="none" stroke="#555" stroke-width="2.6" stroke-linejoin="miter"/>
<path d="M109,1070.0 v10 a7,3 0 0 0 14,0 v-10" fill="#ddd" stroke="#bbb" stroke-width="1.1"/><path d="M109,1070.0 v5 a7,3 0 0 0 4,2.5 v2 a3,1.5 0 0 0 6,0 v-2 a7,3 0 0 0 4,-2.5 v-5" fill="#fff"/><ellipse cx="116" cy="1070.0" rx="7" ry="3" fill="#fff" stroke="#bbb" stroke-width="1.1"/>
<path d="M83,1100.5 l6,6.5 l-6,6.5" fill="none" stroke="#555" stroke-width="2.6" stroke-linejoin="miter"/>
<path d="M109,1102.5 v10 a7,3 0 0 0 14,0 v-10" fill="#ddd" stroke="#bbb" stroke-width="1.1"/><path d="M109,1102.5 v5 a7,3 0 0 0 4,2.5 v2 a3,1.5 0 0 0 6,0 v-2 a7,3 0 0 0 4,-2.5 v-5" fill="#fff"/><ellipse cx="116" cy="1102.5" rx="7" ry="3" fill="#fff" stroke="#bbb" stroke-width="1.1"/>
<path d="M83,1133.0 l6,6.5 l-6,6.5" fill="none" stroke="#555" stroke-width="2.6" stroke-linejoin="miter"/>
<path d="M109,1135.0 v10 a7,3 0 0 0 14,0 v-10" fill="#ddd" stroke="#bbb" stroke-width="1.1"/><path d="M109,1135.0 v5 a7,3 0 0 0 4,2.5 v2 a3,1.5 0 0 0 6,0 v-2 a7,3 0 0 0 4,-2.5 v-5" fill="#fff"/><ellipse cx="116" cy="1135.0" rx="7" ry="3" fill="#fff" stroke="#bbb" stroke-width="1.1"/>
<path d="M83,1165.5 l6,6.5 l-6,6.5" fill="none" stroke="#555" stroke-width="2.6" stroke-linejoin="miter"/>
<path d="M109,1167.5 v10 a7,3 0 0 0 14,0 v-10" fill="#ddd" stroke="#bbb" stroke-width="1.1"/><path d="M109,1167.5 v5 a7,3 0 0 0 4,2.5 v2 a3,1.5 0 0 0 6,0 v-2 a7,3 0 0 0 4,-2.5 v-5" fill="#fff"/><ellipse cx="116" cy="1167.5" rx="7" ry="3" fill="#fff" stroke="#bbb" stroke-width="1.1"/>
<path d="M83,1198.0 l6,6.5 l-6,6.5" fill="none" stroke="#555" stroke-width="2.6" stroke-linejoin="miter"/>
<path d="M109,1200.0 v10 a7,3 0 0 0 14,0 v-10" fill="#ddd" stroke="#bbb" stroke-width="1.1"/><path d="M109,1200.0 v5 a7,3 0 0 0 4,2.5 v2 a3,1.5 0 0 0 6,0 v-2 a7,3 0 0 0 4,-2.5 v-5" fill="#fff"/><ellipse cx="116" cy="1200.0" rx="7" ry="3" fill="#fff" stroke="#bbb" stroke-width="1.1"/>
<path d="M83,1230.5 l6,6.5 l-6,6.5" fill="none" stroke="#555" stroke-width="2.6" stroke-linejoin="miter"/>
<path d="M109,1232.5 v10 a7,3 0 0 0 14,0 v-10" fill="#ddd" stroke="#bbb" stroke-width="1.1"/><path d="M109,1232.5 v5 a7,3 0 0 0 4,2.5 v2 a3,1.5 0 0 0 6,0 v-2 a7,3 0 0 0 4,-2.5 v-5" fill="#fff"/><ellipse cx="116" cy="1232.5" rx="7" ry="3" fill="#fff" stroke="#bbb" stroke-width="1.1"/>
</svg>
<div class="t" style="left:83px;top:188.6px;font-size:17px;color:#3a3a3a;transform:scaleX(0.94);transform-origin:0 0;">Exerc...</div>
<div class="t" style="left:108px;top:221.1px;font-size:17px;color:#aaa;transform:scaleX(0.94);transform-origin:0 0;">Origin</div>
<div class="t" style="left:108px;top:253.6px;font-size:17px;color:#3a3a3a;transform:scaleX(0.94);transform-origin:0 0;">Origin Cube &lt;1&gt;</div>
<div class="t" style="left:108px;top:286.1px;font-size:17px;color:#3a3a3a;transform:scaleX(0.94);transform-origin:0 0;">Frame (5)</div>
<div class="t" style="left:108px;top:318.6px;font-size:17px;color:#333;transform:scaleX(0.94);transform-origin:0 0;">New folder (4)</div>
<div class="t" style="left:108px;top:351.1px;font-size:17px;color:#3a3a3a;transform:scaleX(0.94);transform-origin:0 0;">Shafts Bearings Sp...</div>
<div class="t" style="left:132px;top:383.6px;font-size:17px;color:#3a3a3a;transform:scaleX(0.94);transform-origin:0 0;">1/...</div>
<div class="t" style="left:132px;top:416.1px;font-size:17px;color:#3a3a3a;transform:scaleX(0.94);transform-origin:0 0;">Bearings</div>
<div class="t" style="left:132px;top:448.6px;font-size:17px;color:#3a3a3a;transform:scaleX(0.94);transform-origin:0 0;">Sp...</div>
<div class="t" style="left:132px;top:481.1px;font-size:17px;color:#3a3a3a;transform:scaleX(0.94);transform-origin:0 0;">1/2" Rounded H...</div>
<div class="t" style="left:132px;top:513.5px;font-size:17px;color:#3a3a3a;transform:scaleX(0.94);transform-origin:0 0;">1/2" Rounded H...</div>
<div class="t" style="left:108px;top:546.0px;font-size:17px;color:#3a3a3a;transform:scaleX(0.94);transform-origin:0 0;">Belts / Pulleys (12)</div>
<div class="t" style="left:108px;top:578.5px;font-size:17px;color:#3a3a3a;transform:scaleX(0.94);transform-origin:0 0;">Wheels (4)</div>
<div class="t" style="left:108px;top:611.0px;font-size:17px;color:#3a3a3a;transform:scaleX(0.94);transform-origin:0 0;">Motors (2)</div>
<div class="t" style="left:79px;top:643.5px;font-size:17px;color:#3a3a3a;transform:scaleX(0.94);transform-origin:0 0;">Items (0)</div>
<div class="t" style="left:79px;top:676.0px;font-size:17px;color:#3a3a3a;transform:scaleX(0.94);transform-origin:0 0;">Loads (0)</div>
<div class="t" style="left:79px;top:708.5px;font-size:17px;color:#3a3a3a;transform:scaleX(0.94);transform-origin:0 0;">Mate Features (30)</div>
<div class="t" style="left:132px;top:741.0px;font-size:17px;color:#a5a5a5;transform:scaleX(0.94);transform-origin:0 0;">Group 1</div>
<div class="t" style="left:132px;top:773.5px;font-size:17px;color:#9c9c9c;transform:scaleX(0.94);transform-origin:0 0;">Fastened 1</div>
<div class="t" style="left:132px;top:806.0px;font-size:17px;color:#9c9c9c;transform:scaleX(0.94);transform-origin:0 0;">Fastened 3</div>
<div class="t" style="left:132px;top:838.5px;font-size:17px;color:#9c9c9c;transform:scaleX(0.94);transform-origin:0 0;">Fastened 7</div>
<div class="t" style="left:132px;top:871.0px;font-size:17px;color:#9c9c9c;transform:scaleX(0.94);transform-origin:0 0;">Fastened 23</div>
<div class="t" style="left:132px;top:903.5px;font-size:17px;color:#9c9c9c;transform:scaleX(0.94);transform-origin:0 0;">Fastened 24</div>
<div class="t" style="left:132px;top:936.0px;font-size:17px;color:#9c9c9c;transform:scaleX(0.94);transform-origin:0 0;">Fastened 24 (1)</div>
<div class="t" style="left:132px;top:968.5px;font-size:17px;color:#9c9c9c;transform:scaleX(0.94);transform-origin:0 0;">Fastened 26</div>
<div class="t" style="left:132px;top:1001.0px;font-size:17px;color:#9c9c9c;transform:scaleX(0.94);transform-origin:0 0;">Fastened 27</div>
<div class="t" style="left:132px;top:1033.5px;font-size:17px;color:#9c9c9c;transform:scaleX(0.94);transform-origin:0 0;">Fastened 32</div>
<div class="t" style="left:132px;top:1066.0px;font-size:17px;color:#9c9c9c;transform:scaleX(0.94);transform-origin:0 0;">Fastened 9</div>
<div class="t" style="left:132px;top:1098.5px;font-size:17px;color:#9c9c9c;transform:scaleX(0.94);transform-origin:0 0;">Fastened 11</div>
<div class="t" style="left:132px;top:1131.0px;font-size:17px;color:#9c9c9c;transform:scaleX(0.94);transform-origin:0 0;">Fastened 12</div>
<div class="t" style="left:132px;top:1163.5px;font-size:17px;color:#9c9c9c;transform:scaleX(0.94);transform-origin:0 0;">Fastened 33</div>
<div class="t" style="left:132px;top:1196.0px;font-size:17px;color:#9c9c9c;transform:scaleX(0.94);transform-origin:0 0;">Fastened 19</div>
<div class="t" style="left:132px;top:1228.5px;font-size:17px;color:#9c9c9c;transform:scaleX(0.94);transform-origin:0 0;">Fastened 21</div>
<div class="t" style="left:55px;top:153.1px;font-size:17px;color:#2a2a2a;transform:scaleX(0.995);transform-origin:0 0;-webkit-text-stroke:0.55px #2a2a2a">Instances (33)</div>
<div class="t" style="left:107px;top:116.5px;font-size:16.5px;color:#9a9a9a;transform:scaleX(0.96);transform-origin:0 0;font-style:italic">Filter by name</div>
<div class="a" style="left:306px;top:644px;width:42px;height:43px;background:#fff;border:1px solid #c8c8c8;border-left:none"></div>
<svg class="s" width="400" height="1294"><g stroke="#444" fill="none">
<path d="M316,657 l2,2.5 l2,-2.5" stroke-width="1.3"/>
<path d="M318,662 v16" stroke-width="1.6"/>
<path d="M323,658 h14 M323,663.5 h14 M323,669 h14 M323,674.5 h14" stroke-width="1.6"/>
</g></svg>
<svg class="s" width="2398" height="1294">
<path d="M70.5,1266 v18.5 M61,1275.2 h19" stroke="#555" stroke-width="2.6"/>
<rect x="93" y="1257.5" width="60" height="32" fill="#e8e8e8"/>
<path d="M104,1272 l11.5,-11 l6,5.5 v-4.5 h3 v7.5 l3,2.5 h-2.5 v10.5 h-6.5 v-7.5 h-4.5 v7.5 h-7 v-10.5 z" fill="#555"/>
<path d="M135.5,1257.5 H290 L305.5,1273.5 L290,1289.5 H135.5 L145.5,1273.5 Z" fill="#fff"/>
<path d="M135.5,1257.5 L145.5,1273.5 L135.5,1289.5" fill="none" stroke="#d3d3d3" stroke-width="1.2"/>
<path d="M309,1257 H558 V1283 a7,7 0 0 1 -7,7 H316 a7,7 0 0 1 -7,-7 Z" fill="#e9e9e9"/>
<path d="M561,1257 H810 V1283 a7,7 0 0 1 -7,7 H568 a7,7 0 0 1 -7,-7 Z" fill="#ffffff"/>
<path d="M813.5,1257 H1064 V1283 a7,7 0 0 1 -7,7 H820.5 a7,7 0 0 1 -7,-7 Z" fill="#e9e9e9"/>
<path d="M1066,1257 H1316 V1283 a7,7 0 0 1 -7,7 H1073 a7,7 0 0 1 -7,-7 Z" fill="#e9e9e9"/>
<rect x="562" y="1288.5" width="247" height="3.5" rx="1.7" fill="#1a50b8"/>
<g stroke="#444" stroke-width="1.3" fill="#fff"><path d="M323,1266 l5,-4 h15 v17 l-5,4 h-15 z"/><path d="M323,1266 h15 v17 M338,1266 l5,-4" fill="none"/><path d="M323,1266 l5,-4 h9 v12 h-14 z" fill="#888"/><path d="M323,1266 h10 v11 h-10 z" fill="#777" stroke="#444"/></g>
<g stroke="#444" stroke-width="1.3" fill="#fff"><path d="M575.5,1266 l5,-4 h15 v17 l-5,4 h-15 z"/><path d="M575.5,1266 h15 v17 M590.5,1266 l5,-4" fill="none"/><path d="M575.5,1266 l5,-4 h9 v12 h-14 z" fill="#888"/><path d="M575.5,1266 h10 v11 h-10 z" fill="#777" stroke="#444"/></g>
<g stroke="#444" stroke-width="1.3" fill="#fff"><path d="M829,1270.5 l3,-2 h5 v15 h-8 z"/><path d="M829,1270.5 h5 v13" fill="none"/><path d="M838,1264.5 l4,-2 h7 v21 h-8 l-3,-2 z"/><path d="M838,1264.5 h7 v19 M845,1264.5 l4,-2" fill="none"/></g>
<g stroke="#444" stroke-width="1.3" fill="#fff"><path d="M1082,1270.5 l3,-2 h5 v15 h-8 z"/><path d="M1082,1270.5 h5 v13" fill="none"/><path d="M1091,1264.5 l4,-2 h7 v21 h-8 l-3,-2 z"/><path d="M1091,1264.5 h7 v19 M1098,1264.5 l4,-2" fill="none"/></g>
</svg>
<div class="a" style="left:163px;top:1257px;width:117px;height:33px;overflow:hidden"><div class="t" style="left:0px;top:6.6px;font-size:17px;color:#4a4a4a;transform:scaleX(0.95);transform-origin:0 0;">Exercise 3: Sho</div>
</div>
<div class="t" style="left:350.5px;top:1265.5px;font-size:17px;color:#505050;transform:scaleX(1.015);transform-origin:0 0;">Exercise 3 Assembly</div>
<div class="t" style="left:602.5px;top:1265.5px;font-size:17px;color:#333;transform:scaleX(0.995);transform-origin:0 0;">Exercise 3 Assembly C...</div>
<div class="t" style="left:855px;top:1265.5px;font-size:17px;color:#505050;transform:scaleX(1.0);transform-origin:0 0;">Exercise 3 Part Studio</div>
<div class="t" style="left:1108px;top:1265.5px;font-size:17px;color:#505050;transform:scaleX(0.985);transform-origin:0 0;">Exercise 3 Game piece</div>
<svg class="s" width="2398" height="1294">
<rect x="2358.5" y="474.5" width="40" height="41.2" fill="#fff" stroke="#c4c4c4" stroke-width="1"/>
<rect x="2358.5" y="515.7" width="40" height="41.2" fill="#fff" stroke="#c4c4c4" stroke-width="1"/>
<rect x="2358.5" y="556.9" width="40" height="41.2" fill="#fff" stroke="#c4c4c4" stroke-width="1"/>
<rect x="2358.5" y="598.1" width="40" height="41.2" fill="#fff" stroke="#c4c4c4" stroke-width="1"/>
<rect x="2358.5" y="639.3" width="40" height="41.2" fill="#fff" stroke="#c4c4c4" stroke-width="1"/>
<rect x="2358.5" y="680.5" width="40" height="41.2" fill="#fff" stroke="#c4c4c4" stroke-width="1"/>
<rect x="2358.5" y="734.5" width="40" height="41.2" fill="#fff" stroke="#c4c4c4" stroke-width="1"/>
<rect x="2358.5" y="775.7" width="40" height="41.2" fill="#fff" stroke="#c4c4c4" stroke-width="1"/>
<rect x="2358.5" y="816.9" width="40" height="41.2" fill="#fff" stroke="#c4c4c4" stroke-width="1"/>
<rect x="2367" y="483.6" width="22" height="22" rx="4" fill="none" stroke="#333" stroke-width="2"/><path d="M2372,489.6 h12 M2375,493.1 h9 M2375,496.6 h9 M2372,500.1 h12" stroke="#333" stroke-width="2"/>
<rect x="2367" y="522.8000000000001" width="11" height="9" fill="#2a62c8"/><path d="M2367,525.8000000000001 h11 M2367,528.8000000000001 h11 M2370.7,522.8000000000001 v9 M2374.4,522.8000000000001 v9" stroke="#fff" stroke-width="0.8"/><path d="M2371,533.8000000000001 l9,-6 l9,5 v10 l-9,6 l-9,-5 z M2371,533.8000000000001 l9,5 l9,-5 M2380,538.8000000000001 v10" fill="#fff" stroke="#333" stroke-width="1.5"/>
<rect x="2367" y="565.0" width="6" height="6" fill="#ddd" stroke="#555" stroke-width="1.1"/><path d="M2370,571.0 v4 h6" stroke="#2a62c8" stroke-width="1.2" stroke-dasharray="2,1"/><path d="M2376,583.0 l4,-3 h3 v-5 l3,-2 h3 v13 l-3,3 h-10 z M2376,583.0 h10 v6" fill="#fff" stroke="#555" stroke-width="1.2"/>
<rect x="2379" y="606.2" width="8" height="18" fill="none" stroke="#2a62c8" stroke-width="1.3" stroke-dasharray="2.5,1.5"/><rect x="2367" y="621.2" width="20" height="8" fill="#fff" stroke="#333" stroke-width="1.5"/><circle cx="2383" cy="625.2" r="2.3" fill="none" stroke="#333" stroke-width="1.2"/>
<polygon points="2378,647.4 2386.5,653.4 2386.5,664.4 2378,670.4 2369.5,664.4 2369.5,653.4" fill="#9a9a9a"/><polygon points="2378,659.4 2369.5,664.4 2378,670.4" fill="#1a4fb8"/><polygon points="2378,659.4 2369.5,653.4 2369.5,664.4" fill="#2a62c8"/><polygon points="2378,647.4 2386.5,653.4 2378,659.4" fill="#9ccff2"/><polygon points="2378,647.4 2369.5,653.4 2378,659.4" fill="#6ab4ea"/><polygon points="2378,659.4 2386.5,653.4 2386.5,664.4" fill="#b0b0b0"/><path d="M2378,647.4 V670.4 M2369.5,653.4 L2386.5,664.4 M2386.5,653.4 L2369.5,664.4" stroke="#fff" stroke-width="1.3"/>
<rect x="2369" y="688.6" width="9" height="9" fill="#444"/><path d="M2369,691.6 h9 M2369,694.6 h9 M2372,688.6 v9 M2375,688.6 v9" stroke="#fff" stroke-width="0.8"/><path d="M2368,692.6 q-4,8 0,17 M2387,692.6 q4,8 0,17" fill="none" stroke="#333" stroke-width="1.8"/><path d="M2372,696.6 l11,13 M2383,696.6 l-11,13" stroke="#333" stroke-width="3"/>
<rect x="2365" y="741.6" width="26" height="26" rx="4" fill="#e6e6e6"/><circle cx="2378" cy="754.6" r="9" fill="none" stroke="#e8a53a" stroke-width="6"/><path d="M2371.6,748.2 a9,9 0 0 1 12.8,0" fill="none" stroke="#6cbf5a" stroke-width="6"/><path d="M2371.6,748.2 a9,9 0 0 0 0,12.8" fill="none" stroke="#e55a4a" stroke-width="6"/><path d="M2384.4,748.2 a9,9 0 0 1 0,12.8" fill="none" stroke="#4aaee8" stroke-width="6"/><circle cx="2378" cy="754.6" r="5" fill="#fff"/><path d="M2366,754.6 h4 M2386,754.6 h4 M2378,742.6 v4 M2378,762.6 v4" stroke="#e6e6e6" stroke-width="2"/>
<rect x="2365" y="782.8000000000001" width="26" height="26" rx="3" fill="#ccc"/><rect x="2367.5" y="785.3000000000001" width="21" height="21" fill="#0a4fd0" stroke="#222" stroke-width="1.2"/><text x="2378" y="801.3000000000001" font-family="Liberation Serif" font-weight="bold" font-size="14" fill="#fff" text-anchor="middle" textLength="17" lengthAdjust="spacingAndGlyphs">MK</text>
<rect x="2365" y="824.0" width="26" height="26" rx="4" fill="#d6d6d6"/><path d="M2378,837.0 L2369.5,828.5 A12,12 0 0 1 2386.5,828.5 Z" fill="#62b84e"/><path d="M2378,837.0 L2386.5,828.5 A12,12 0 0 1 2386.5,845.5 Z" fill="#49aee6"/><path d="M2378,837.0 L2386.5,845.5 A12,12 0 0 1 2369.5,845.5 Z" fill="#eeae3c"/><path d="M2378,837.0 L2369.5,845.5 A12,12 0 0 1 2369.5,828.5 Z" fill="#e0483e"/>
<g fill="#dfe6ee"><polygon points="2285.5,115 2279,126 2292,126"/><polygon points="2192.5,208 2204.5,199.5 2204.5,217"/><polygon points="2378.5,208 2366.5,199.5 2366.5,217"/><polygon points="2285.5,301.5 2279,289.5 2292,289.5"/></g><path d="M2258,127.5 q-22,7 -34,21" fill="none" stroke="#dfe6ee" stroke-width="5.5"/><polygon points="2218,141 2216,157 2232,155" fill="#dfe6ee"/><path d="M2313,127.5 q22,7 34,21" fill="none" stroke="#dfe6ee" stroke-width="5.5"/><polygon points="2353,141 2355,157 2339,155" fill="#dfe6ee"/><path d="M2236,190 q0,-8 8,-14 l22,-17 q8,-5 16,-3 l36,9 q12,4 14,14 l1,60 q0,8 -8,14 l-28,18 q-6,4 -14,2 l-34,-12 q-12,-4 -12,-14 z" fill="#dfe6ee"/><path d="M2254,181 Q2251,176 2257,172 L2277,162 Q2282,159 2288,161 L2313,169 Q2320,172 2315,178 L2305,189 Q2301,193 2294,192 L2262,188 Q2256,186 2254,181 Z" fill="#fff"/><path d="M2243,203 Q2243,197 2250,198 L2280,203 Q2290,206 2290,216 L2290,246 Q2290,252 2283,250 L2251,240 Q2243,237 2243,230 Z" fill="#fff"/><path d="M2304,212 Q2304,206 2310,202 L2326,190 Q2331,187 2331,193 L2331,226 Q2331,232 2326,235 L2309,246 Q2304,249 2304,243 Z" fill="#fff"/><ellipse cx="2245" cy="189" rx="3.5" ry="6.5" fill="#fff" transform="rotate(20 2245 189)"/><ellipse cx="2325" cy="176" rx="2" ry="5" fill="#fff" transform="rotate(-40 2325 176)"/><ellipse cx="2296" cy="256" rx="8" ry="3.5" fill="#fff" transform="rotate(-15 2296 256)"/><circle cx="2296" cy="203" r="8" fill="#fff"/><path d="M2271.5,152 V215.5" stroke="#9a9af0" stroke-width="1.1"/><path d="M2271.5,152 v10 M2271.5,188 v14" stroke="#3a3ae0" stroke-width="2.2"/><path d="M2271.5,215.5 L2235,246" stroke="#f0a0a0" stroke-width="1"/><path d="M2245,238 L2235,246" stroke="#e04040" stroke-width="2.2"/><path d="M2271.5,215.5 L2334.5,233.5" stroke="#90d090" stroke-width="1"/><path d="M2326,231 L2334.5,233.5 M2290,221 l6,1.7" stroke="#40b040" stroke-width="2.2"/><text x="2271" y="147" font-family="Liberation Sans" font-size="14" fill="#2828d8" text-anchor="middle" font-weight="bold">Z</text><text x="2228" y="259" font-family="Liberation Sans" font-size="14" fill="#d83838" text-anchor="middle">X</text><text x="2346" y="244" font-family="Liberation Sans" font-size="14" fill="#3aa83a" text-anchor="middle" font-weight="bold">Y</text><text x="2267" y="229" font-family="Liberation Sans" font-size="13" fill="#555" text-anchor="middle" transform="rotate(14 2267 229)">Right</text><text x="2287" y="174" font-family="Liberation Sans" font-size="11" fill="#666" text-anchor="middle" transform="rotate(155 2287 174)">Top</text><text x="2317" y="218" font-family="Liberation Sans" font-size="10" fill="#666" text-anchor="middle" transform="rotate(-50 2317 218)">Back</text><path d="M2329.5,285 l11.5,-5 l11,5 v13 l-11,5.5 l-11.5,-5.5 z" fill="#aaa" stroke="#333" stroke-width="1.3"/><path d="M2329.5,285 l11.5,5 l11,-5 M2341,290 v13.5" fill="none" stroke="#333" stroke-width="1.3"/><polygon points="2341,290 2352,285 2352,298 2341,303.5" fill="#ddd"/><polygon points="2329.5,285 2341,280 2352,285 2341,290" fill="#fff"/><path d="M2329.5,285 l11.5,-5 l11,5 v13 l-11,5.5 l-11.5,-5.5 z M2329.5,285 l11.5,5 l11,-5 M2341,290 v13.5" fill="none" stroke="#333" stroke-width="1.3"/><polygon points="2362.5,288.5 2373,288.5 2367.7,294" fill="#333"/><g fill="none" stroke="#333" stroke-width="1.9"><ellipse cx="2289" cy="1236" rx="6" ry="4.3"/><ellipse cx="2289" cy="1235.7" rx="3" ry="1.3"/><path d="M2283,1236 v4 M2295,1236 v6 q0,3 -5,3.5 h-14 v-6.5 h7"/><path d="M2316.5,1246 a12,14 0 0 1 24,0 z M2321.5,1243.5 a7,8 0 0 1 14,0 h-4 a3,3 0 0 0 -6,0 z"/></g><g fill="#333"><rect x="2364" y="1245" width="17.5" height="2" /><rect x="2372" y="1230" width="1.6" height="15"/><rect x="2365" y="1230" width="16" height="1.6"/><polygon points="2366,1231 2364,1240 2368,1240"/><polygon points="2380,1231 2378,1240 2382,1240"/><rect x="2364" y="1239.5" width="4.5" height="1.8"/><rect x="2377.5" y="1239.5" width="4.5" height="1.8"/></g></svg>
<div class="a" style="left:2396px;top:0;width:2px;height:1294px;background:#a8a8a8"></div>
</body></html>
